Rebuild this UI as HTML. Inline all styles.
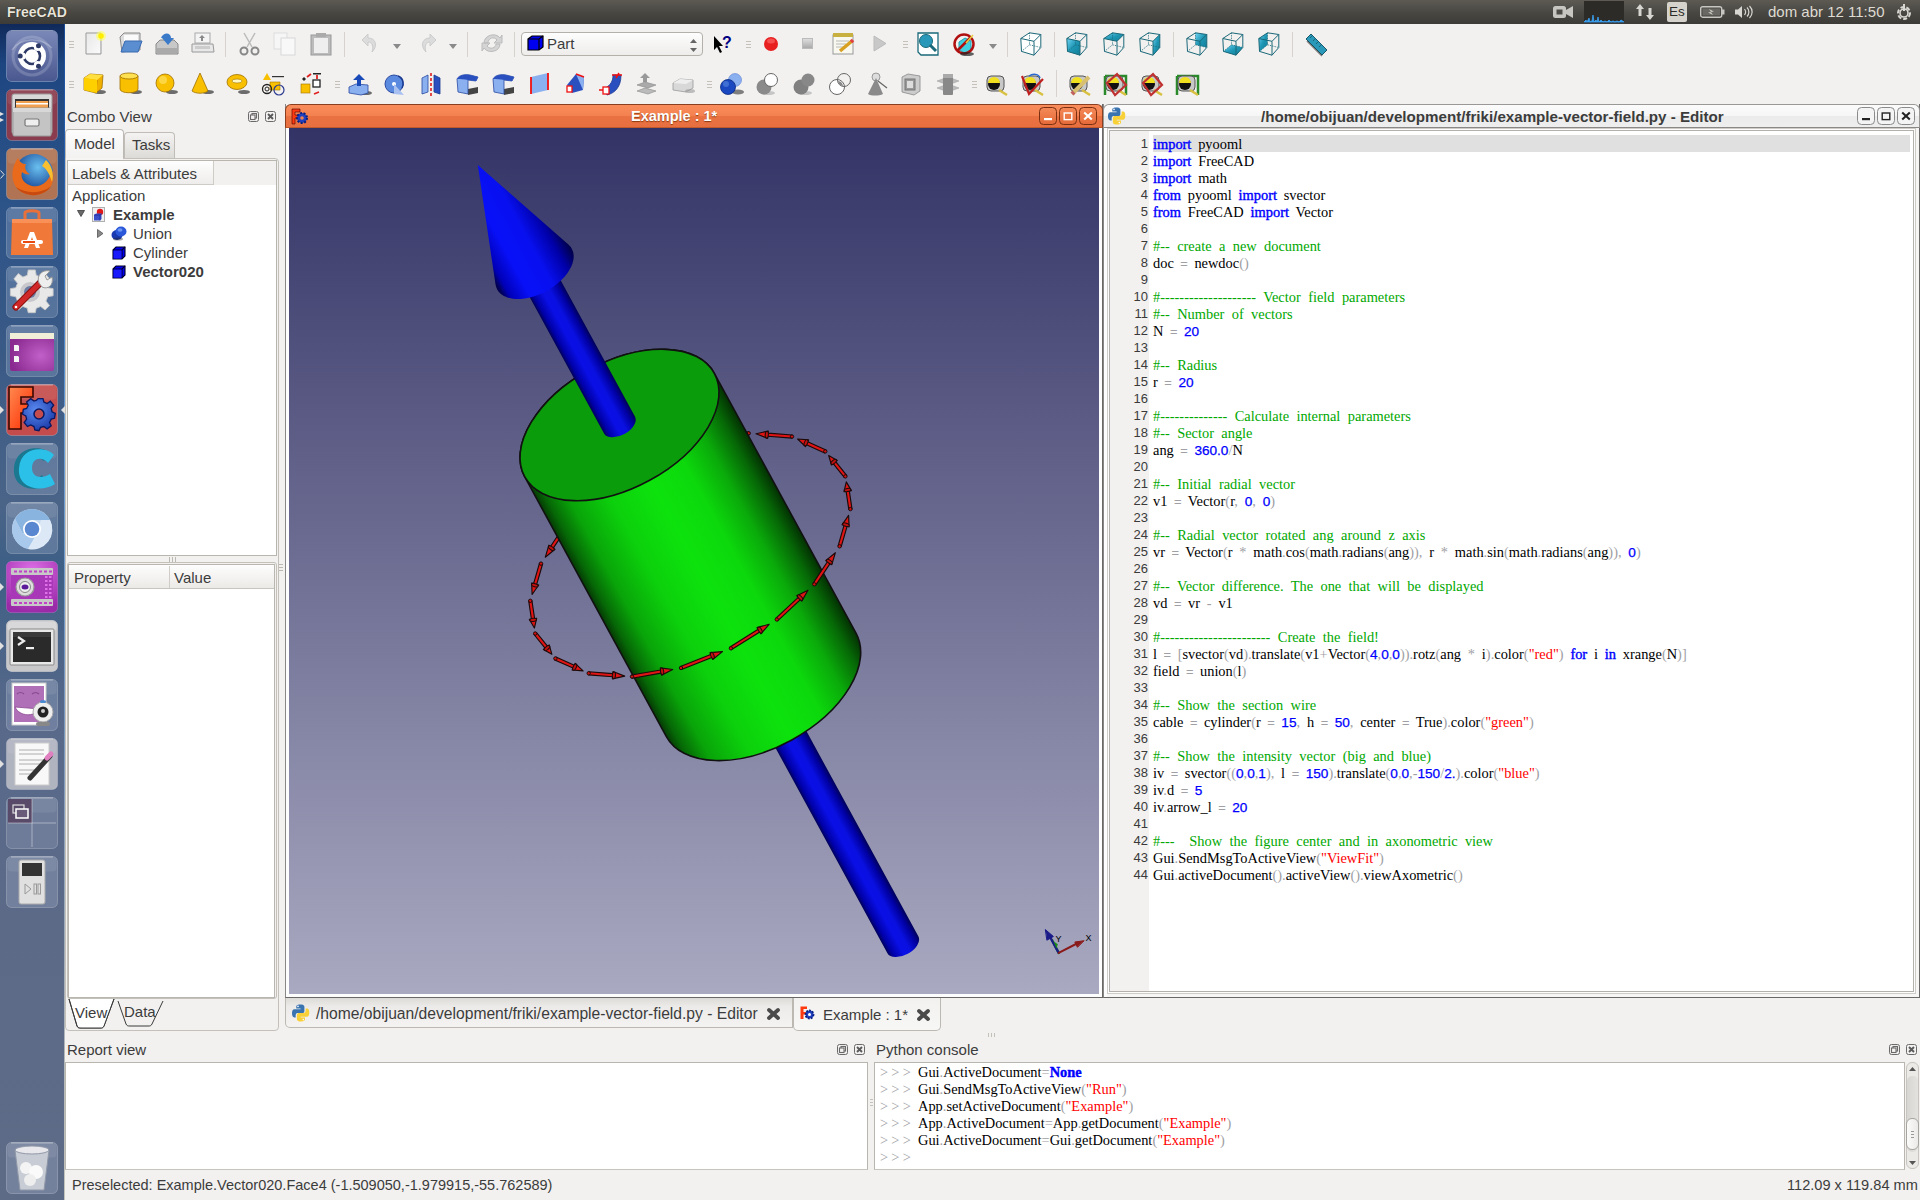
<!DOCTYPE html><html><head><meta charset="utf-8"><style>

*{box-sizing:border-box;margin:0;padding:0}
html,body{width:1920px;height:1200px;overflow:hidden;background:#f2f1f0;font-family:"Liberation Sans",sans-serif;color:#3c3c3c;position:relative}
.a{position:absolute}
.t{white-space:pre;line-height:1}
svg{overflow:visible}
.code{font-family:"Liberation Serif",serif;font-size:14.4px;color:#000;white-space:pre;word-spacing:3.2px;line-height:17px}
.k{color:#0000ff;-webkit-text-stroke:0.4px #0000ff}
.c{color:#00a800;word-spacing:3.8px}
.n{color:#0000ff;font-family:"Liberation Sans",sans-serif;font-size:13.6px;-webkit-text-stroke:0.25px #0000ff;word-spacing:0}
.eq{color:#a0a0a4;font-family:"Liberation Sans",sans-serif;font-size:12px;-webkit-text-stroke:0.3px #a0a0a4}
.o{color:#a0a0a4}
.s{color:#ff0000}

</style></head><body>
<div class="a" style="left:0px;top:0px;width:1920px;height:24px;background:linear-gradient(#5c5a53,#4a4843 50%,#3c3b37)"></div><div class="a t" style="left:7px;top:5px;font-size:14px;font-weight:bold;color:#e8e4da;text-shadow:0 0 1px #000">FreeCAD</div><svg class="a" style="left:1553px;top:5px" width="21" height="14" viewBox="0 0 21 14"><rect x="0" y="1" width="13" height="12" rx="2.5" fill="#c8c6c0"/><rect x="3.5" y="4.5" width="6" height="5" fill="#4e4c47"/><path d="M13,5 L20,1 L20,13 L13,9 Z" fill="#c8c6c0"/></svg><div class="a" style="left:1584px;top:1px;width:40px;height:22px;background:#2c2b28"></div><svg class="a" style="left:1584px;top:12px" width="40" height="11" viewBox="0 0 40 11"><path d="M0,10 L2,8 L3,10 L5,6 L6,10 L8,9 L9,3 L10,10 L12,8 L13,10 L14,5 L15,10 L17,8 L19,10 L21,9 L23,10 L25,8 L27,10 L29,9 L31,10 L33,9 L35,10 L37,8 L40,10 Z" fill="#3aa0f0" stroke="#3aa0f0" stroke-width="0.8"/></svg><svg class="a" style="left:1636px;top:4px" width="19" height="16" viewBox="0 0 19 16"><path d="M4,0 L8,5 L5.5,5 L5.5,12 L2.5,12 L2.5,5 L0,5 Z M14,16 L18,11 L15.5,11 L15.5,4 L12.5,4 L12.5,11 L10,11 Z" fill="#d8d6d0"/></svg><div class="a" style="left:1667px;top:2px;width:20px;height:20px;background:#d6d3cc;border-radius:2px"></div><div class="a t" style="left:1669px;top:5px;font-size:13.5px;color:#2c2b27">Es</div><svg class="a" style="left:1700px;top:6px" width="25" height="12" viewBox="0 0 25 12"><rect x="0.7" y="0.7" width="21" height="10.5" rx="2" fill="none" stroke="#c8c6c0" stroke-width="1.4"/><rect x="22" y="3.5" width="2.5" height="5" fill="#c8c6c0"/><rect x="2.5" y="2.5" width="17.5" height="7" fill="#6a6862"/><path d="M9,3 L14,5.5 L11,6 L13,9 L8,6.5 L11,6 Z" fill="#c8c6c0"/></svg><svg class="a" style="left:1735px;top:5px" width="20" height="14" viewBox="0 0 20 14"><path d="M0,4.5 L3,4.5 L7,1 L7,13 L3,9.5 L0,9.5 Z" fill="#d8d6d0"/><path d="M9.5,4 C11,6 11,8 9.5,10 M12,2.5 C14.5,5 14.5,9 12,11.5 M14.5,1 C18,4.5 18,9.5 14.5,13" fill="none" stroke="#d8d6d0" stroke-width="1.2"/></svg><div class="a t" style="left:1768px;top:4px;font-size:15px;color:#dfdbd2">dom abr 12 11:50</div><svg class="a" style="left:1895px;top:3px" width="18" height="18" viewBox="0 0 18 18"><circle cx="9" cy="10" r="6" fill="none" stroke="#d8d6d0" stroke-width="2" stroke-dasharray="4 2"/><circle cx="9" cy="10" r="4" fill="none" stroke="#d8d6d0" stroke-width="1.6"/><rect x="8" y="1" width="2" height="7" fill="#d8d6d0"/></svg>
<div class="a" style="left:0;top:24px;width:65px;height:1176px;background:linear-gradient(180deg,#10295a 0px,#1d4580 40px,#2a5288 150px,#3a5a86 330px,#4a6488 480px,#3e5f86 540px,#58698a 700px,#5c6a88 900px,#5e6b87 1176px)"></div><div class="a" style="left:64px;top:24px;width:1px;height:1176px;background:linear-gradient(#1c4c98,#2a6ac0 200px,#6aa0d8 400px,#7a98c0 700px,#a8b0b8 950px,#c4c6bc 1176px)"></div><svg class="a" style="left:6px;top:30px" width="52" height="52" viewBox="0 0 52 52"><rect x="0.5" y="0.5" width="51" height="51" rx="5" fill="#6676b0" stroke="rgba(255,255,255,0.22)" stroke-width="1"/><path d="M5,1 L47,1" stroke="rgba(255,255,255,0.45)" stroke-width="1"/><rect x="1.5" y="1.5" width="49" height="14" rx="4" fill="rgba(255,255,255,0.08)"/><defs><linearGradient id="gUb" x1="0" y1="0" x2="0" y2="1"><stop offset="0" stop-color="#7a88b8"/><stop offset="1" stop-color="#4a5890"/></linearGradient></defs><rect x="1" y="1" width="50" height="50" rx="4.5" fill="url(#gUb)"/><path d="M6,20 C14,8 34,6 46,18" fill="none" stroke="rgba(255,255,255,0.25)" stroke-width="1.5"/><circle cx="26" cy="26" r="19" fill="none" stroke="rgba(255,255,255,0.18)" stroke-width="3"/><circle cx="26" cy="26" r="14" fill="#fff"/><circle cx="26" cy="26" r="8" fill="none" stroke="#2e3a66" stroke-width="2.6"/><g fill="#fff"><circle cx="31.5" cy="17.5" r="3.6"/><circle cx="16.5" cy="26" r="3.6"/><circle cx="31.5" cy="34.5" r="3.6"/></g><g fill="#2e3a66"><circle cx="32.5" cy="15.8" r="2.5"/><circle cx="14.2" cy="26" r="2.5"/><circle cx="32.5" cy="36.2" r="2.5"/></g></svg><svg class="a" style="left:6px;top:89px" width="52" height="52" viewBox="0 0 52 52"><rect x="0.5" y="0.5" width="51" height="51" rx="5" fill="#8a3c4e" stroke="rgba(255,255,255,0.22)" stroke-width="1"/><path d="M5,1 L47,1" stroke="rgba(255,255,255,0.45)" stroke-width="1"/><rect x="1.5" y="1.5" width="49" height="14" rx="4" fill="rgba(255,255,255,0.08)"/><rect x="6" y="5" width="40" height="40" rx="2" fill="#d8d8d8" stroke="#9a9a9a" stroke-width="1"/><rect x="9" y="10" width="34" height="9" fill="#333"/><rect x="10" y="12" width="32" height="7" fill="#f0a050"/><rect x="10" y="14" width="32" height="1.5" fill="#fff"/><rect x="7" y="19" width="38" height="28" rx="1" fill="#c4c4c4" stroke="#999" stroke-width="1"/><rect x="7" y="19" width="38" height="4" fill="#d8d8d8"/><rect x="19" y="30" width="14" height="7" rx="1.5" fill="#eee" stroke="#777" stroke-width="1.2"/></svg><svg class="a" style="left:6px;top:148px" width="52" height="52" viewBox="0 0 52 52"><rect x="0.5" y="0.5" width="51" height="51" rx="5" fill="#b07454" stroke="rgba(255,255,255,0.22)" stroke-width="1"/><path d="M5,1 L47,1" stroke="rgba(255,255,255,0.45)" stroke-width="1"/><rect x="1.5" y="1.5" width="49" height="14" rx="4" fill="rgba(255,255,255,0.08)"/><defs><radialGradient id="gFx" cx="0.6" cy="0.35" r="0.6"><stop offset="0" stop-color="#6ac0f0"/><stop offset="1" stop-color="#1a4a98"/></radialGradient></defs><circle cx="28" cy="25" r="19" fill="url(#gFx)"/><path d="M12,10 C6,18 4,30 10,39 C18,50 38,50 45,38 C47,34 48,28 46,22 C44,32 36,40 26,38 C18,36 14,30 16,24 C18,26 22,27 24,26 C20,24 18,20 20,16 C16,16 14,14 12,10 Z" fill="#e86a1a"/><path d="M40,12 C46,18 48,26 46,34 C44,28 42,22 36,18 Z" fill="#f8c030"/><path d="M10,39 C18,50 38,50 45,38 C36,46 20,46 10,39Z" fill="#c84a10"/></svg><svg class="a" style="left:6px;top:207px" width="52" height="52" viewBox="0 0 52 52"><rect x="0.5" y="0.5" width="51" height="51" rx="5" fill="rgba(190,200,225,0.24)" stroke="rgba(255,255,255,0.22)" stroke-width="1"/><path d="M5,1 L47,1" stroke="rgba(255,255,255,0.45)" stroke-width="1"/><rect x="1.5" y="1.5" width="49" height="14" rx="4" fill="rgba(255,255,255,0.08)"/><path d="M19,12 L19,6 C19,3 33,3 33,6 L33,12" fill="none" stroke="#e8703a" stroke-width="3"/><path d="M6,12 L46,12 L47,48 L5,48 Z" fill="#f07838"/><rect x="6" y="12" width="40" height="4" fill="#f89058"/><path d="M18,41 L24,25 L28,25 L34,41 L30,41 L26,30 L22,41 Z" fill="#fff"/><rect x="15" y="33" width="22" height="4" rx="2" fill="#fff"/><rect x="17" y="34" width="12" height="2" fill="#e84a10"/></svg><svg class="a" style="left:6px;top:266px" width="52" height="52" viewBox="0 0 52 52"><rect x="0.5" y="0.5" width="51" height="51" rx="5" fill="rgba(190,200,225,0.24)" stroke="rgba(255,255,255,0.22)" stroke-width="1"/><path d="M5,1 L47,1" stroke="rgba(255,255,255,0.45)" stroke-width="1"/><rect x="1.5" y="1.5" width="49" height="14" rx="4" fill="rgba(255,255,255,0.08)"/><path d="M21,4 L29,4 L30,10 L35,12 L40,8 L45,14 L41,19 L43,24 L49,25 L49,33 L43,34 L41,39 L45,44 L40,49 L35,45 L30,47 L29,52 L21,52 L20,47 L15,45 L10,49 L5,44 L9,39 L7,34 L1,33 L1,25 L7,24 L9,19 L5,14 L10,8 L15,12 L20,10 Z" fill="#e8e8e8" stroke="#c8c8c8" stroke-width="1" transform="translate(3.5,0.4) scale(0.89)"/><circle cx="24" cy="26" r="10" fill="#c8c8cc"/><circle cx="24" cy="26" r="6" fill="#6a7aa0"/><path d="M10,41 L36,15" stroke="#8a1010" stroke-width="7" stroke-linecap="round"/><path d="M10,41 L36,15" stroke="#d02828" stroke-width="5" stroke-linecap="round"/><circle cx="10" cy="41" r="1.3" fill="#fff"/><path d="M33,17 C30,10 36,3 44,5 L39,10 L41,14 L46,11 C48,19 42,24 36,21 Z" fill="#eee" stroke="#999" stroke-width="1"/></svg><svg class="a" style="left:6px;top:325px" width="52" height="52" viewBox="0 0 52 52"><rect x="0.5" y="0.5" width="51" height="51" rx="5" fill="rgba(190,200,225,0.24)" stroke="rgba(255,255,255,0.22)" stroke-width="1"/><path d="M5,1 L47,1" stroke="rgba(255,255,255,0.45)" stroke-width="1"/><rect x="1.5" y="1.5" width="49" height="14" rx="4" fill="rgba(255,255,255,0.08)"/><defs><radialGradient id="gPw" cx="0.7" cy="0.6" r="0.7"><stop offset="0" stop-color="#c060c8"/><stop offset="1" stop-color="#8a2a90"/></radialGradient></defs><rect x="4" y="8" width="44" height="38" rx="2" fill="url(#gPw)"/><rect x="4" y="8" width="44" height="6" fill="#f2efd8"/><path d="M8,20 L12,20 L13,21 L13,26 L8,26 Z M8,31 L12,31 L13,32 L13,37 L8,37 Z" fill="#f4f4f4"/></svg><svg class="a" style="left:6px;top:384px" width="52" height="52" viewBox="0 0 52 52"><rect x="0.5" y="0.5" width="51" height="51" rx="5" fill="#c44c4c" stroke="rgba(255,255,255,0.22)" stroke-width="1"/><path d="M5,1 L47,1" stroke="rgba(255,255,255,0.45)" stroke-width="1"/><rect x="1.5" y="1.5" width="49" height="14" rx="4" fill="rgba(255,255,255,0.08)"/><defs><linearGradient id="gFc" x1="0" y1="0" x2="1" y2="1"><stop offset="0" stop-color="#ff8a50"/><stop offset="1" stop-color="#ff2a00"/></linearGradient><radialGradient id="gGear" cx="0.4" cy="0.35" r="0.7"><stop offset="0" stop-color="#5a8af0"/><stop offset="1" stop-color="#1a3aa8"/></radialGradient></defs><path d="M3,3 L27,3 L27,13 L15,13 L15,20 L24,20 L24,29 L15,29 L15,45 L3,45 Z" fill="url(#gFc)" stroke="#3a0800" stroke-width="1.6"/><path d="M30,13 L36,13 L37,17 L41,19 L45,16 L49,21 L46,25 L47,29 L51,31 L50,37 L46,38 L44,42 L46,46 L41,50 L37,47 L33,48 L31,52 L26,51 L25,47 L21,45 L17,47 L13,42 L16,38 L15,34 L11,32 L12,26 L16,25 L18,21 L16,17 L21,13 L25,16 L28,15 Z" fill="url(#gGear)" stroke="#0a1860" stroke-width="1.6" transform="translate(7.5,4) scale(0.82)"/><circle cx="33" cy="30" r="5" fill="#c44c4c" stroke="#0a1860" stroke-width="1.5"/></svg><svg class="a" style="left:6px;top:443px" width="52" height="52" viewBox="0 0 52 52"><rect x="0.5" y="0.5" width="51" height="51" rx="5" fill="rgba(190,200,225,0.24)" stroke="rgba(255,255,255,0.22)" stroke-width="1"/><path d="M5,1 L47,1" stroke="rgba(255,255,255,0.45)" stroke-width="1"/><rect x="1.5" y="1.5" width="49" height="14" rx="4" fill="rgba(255,255,255,0.08)"/><path d="M44,10 C36,2 10,2 8,25 C6,46 30,50 42,42 L36,32 C30,38 20,36 20,25 C20,14 32,12 38,18 Z" fill="#1a7890"/><path d="M48,12 C40,3 15,3 13,25 C11,46 36,50 49,41 L44,31 C36,36 26,35 26,25 C26,15 36,13 42,20 Z" fill="#2ac0e8"/></svg><svg class="a" style="left:6px;top:502px" width="52" height="52" viewBox="0 0 52 52"><rect x="0.5" y="0.5" width="51" height="51" rx="5" fill="rgba(190,200,225,0.24)" stroke="rgba(255,255,255,0.22)" stroke-width="1"/><path d="M5,1 L47,1" stroke="rgba(255,255,255,0.45)" stroke-width="1"/><rect x="1.5" y="1.5" width="49" height="14" rx="4" fill="rgba(255,255,255,0.08)"/><circle cx="26" cy="27" r="20" fill="#c8dcf0"/><path d="M26,7 A20,20 0 0 0 9,17 L17,32 L26,18 L44,18 A20,20 0 0 0 26,7 Z" fill="#8ab4e0"/><path d="M9,17 A20,20 0 0 0 22,47 L30,33 L17,32 Z" fill="#a8c8ec"/><path d="M44,18 L35,18 L30,33 L22,47 A20,20 0 0 0 44,18 Z" fill="#dce8f6"/><circle cx="26" cy="27" r="9" fill="#fff"/><circle cx="26" cy="27" r="7.3" fill="#5a88d0"/></svg><svg class="a" style="left:6px;top:561px" width="52" height="52" viewBox="0 0 52 52"><rect x="0.5" y="0.5" width="51" height="51" rx="5" fill="#b04cc0" stroke="rgba(255,255,255,0.22)" stroke-width="1"/><path d="M5,1 L47,1" stroke="rgba(255,255,255,0.45)" stroke-width="1"/><rect x="1.5" y="1.5" width="49" height="14" rx="4" fill="rgba(255,255,255,0.08)"/><defs><radialGradient id="gRc" cx="0.5" cy="0.2" r="0.8"><stop offset="0" stop-color="#e070e8"/><stop offset="1" stop-color="#9a2aa8"/></radialGradient></defs><rect x="0.5" y="0.5" width="51" height="51" rx="5" fill="url(#gRc)"/><rect x="5" y="13" width="42" height="26" fill="#a838b8"/><rect x="5" y="7" width="42" height="7" rx="1" fill="#c8c8c8"/><rect x="5" y="38" width="42" height="7" rx="1" fill="#c8c8c8"/><rect x="8" y="9.5" width="3" height="2" fill="#c040c8"/><rect x="8" y="41" width="3" height="2" fill="#c040c8"/><rect x="13" y="9.5" width="3" height="2" fill="#c040c8"/><rect x="13" y="41" width="3" height="2" fill="#c040c8"/><rect x="18" y="9.5" width="3" height="2" fill="#c040c8"/><rect x="18" y="41" width="3" height="2" fill="#c040c8"/><rect x="23" y="9.5" width="3" height="2" fill="#c040c8"/><rect x="23" y="41" width="3" height="2" fill="#c040c8"/><rect x="28" y="9.5" width="3" height="2" fill="#c040c8"/><rect x="28" y="41" width="3" height="2" fill="#c040c8"/><rect x="33" y="9.5" width="3" height="2" fill="#c040c8"/><rect x="33" y="41" width="3" height="2" fill="#c040c8"/><rect x="38" y="9.5" width="3" height="2" fill="#c040c8"/><rect x="38" y="41" width="3" height="2" fill="#c040c8"/><rect x="43" y="9.5" width="3" height="2" fill="#c040c8"/><rect x="43" y="41" width="3" height="2" fill="#c040c8"/><g fill="#e070e8"><rect x="39" y="15" width="2.5" height="2"/><rect x="43" y="15" width="2.5" height="2"/><rect x="39" y="19" width="2.5" height="2"/><rect x="43" y="19" width="2.5" height="2"/><rect x="39" y="23" width="2.5" height="2"/><rect x="43" y="23" width="2.5" height="2"/><rect x="39" y="27" width="2.5" height="2"/><rect x="43" y="27" width="2.5" height="2"/><rect x="39" y="31" width="2.5" height="2"/><rect x="43" y="31" width="2.5" height="2"/><rect x="39" y="35" width="2.5" height="2"/><rect x="43" y="35" width="2.5" height="2"/></g><circle cx="19" cy="26" r="9" fill="#ddd" stroke="#999" stroke-width="1.2"/><circle cx="19" cy="26" r="5.5" fill="#eee" stroke="#888"/><ellipse cx="19" cy="26" rx="3.5" ry="2.5" fill="#5a1a9a"/></svg><svg class="a" style="left:6px;top:620px" width="52" height="52" viewBox="0 0 52 52"><rect x="0.5" y="0.5" width="51" height="51" rx="5" fill="#c4c4c6" stroke="rgba(255,255,255,0.22)" stroke-width="1"/><path d="M5,1 L47,1" stroke="rgba(255,255,255,0.45)" stroke-width="1"/><rect x="1.5" y="1.5" width="49" height="14" rx="4" fill="rgba(255,255,255,0.08)"/><rect x="0.5" y="0.5" width="51" height="51" rx="5" fill="#c8c8ca"/><rect x="1.5" y="1.5" width="49" height="10" rx="4" fill="#d8d8da"/><rect x="4" y="9" width="44" height="36" rx="1" fill="#e8e8e8" stroke="#888" stroke-width="1"/><rect x="7" y="12" width="38" height="30" fill="#2a2a2a"/><rect x="7" y="12" width="38" height="5" fill="#3a3a3a"/><path d="M12,17 L18,21 L12,25" fill="none" stroke="#eee" stroke-width="2.2"/><rect x="20" y="27" width="8" height="2.2" fill="#eee"/></svg><svg class="a" style="left:6px;top:679px" width="52" height="52" viewBox="0 0 52 52"><rect x="0.5" y="0.5" width="51" height="51" rx="5" fill="rgba(190,200,225,0.24)" stroke="rgba(255,255,255,0.22)" stroke-width="1"/><path d="M5,1 L47,1" stroke="rgba(255,255,255,0.45)" stroke-width="1"/><rect x="1.5" y="1.5" width="49" height="14" rx="4" fill="rgba(255,255,255,0.08)"/><rect x="6" y="4" width="34" height="42" fill="#fff" stroke="#ccc"/><rect x="8" y="7" width="30" height="36" fill="#b070b8"/><path d="M11,15 C13,13 16,13 18,15 M26,15 C28,13 31,13 33,15" fill="none" stroke="#8a4a90" stroke-width="1.2"/><path d="M9,28 C14,38 28,38 34,30 Z" fill="#fff" stroke="#8a4a90" stroke-width="0.8"/><circle cx="37" cy="33" r="10" fill="#eee" stroke="#aaa"/><circle cx="37" cy="33" r="5.5" fill="#222"/><circle cx="37" cy="32" r="2" fill="#ccc"/><ellipse cx="37" cy="22.5" rx="3" ry="1.5" fill="#4a8ad0"/><rect x="30" y="43" width="14" height="4" rx="2" fill="#888"/></svg><svg class="a" style="left:6px;top:738px" width="52" height="52" viewBox="0 0 52 52"><rect x="0.5" y="0.5" width="51" height="51" rx="5" fill="rgba(205,205,210,0.75)" stroke="rgba(255,255,255,0.22)" stroke-width="1"/><path d="M5,1 L47,1" stroke="rgba(255,255,255,0.45)" stroke-width="1"/><rect x="1.5" y="1.5" width="49" height="14" rx="4" fill="rgba(255,255,255,0.08)"/><rect x="9" y="5" width="34" height="42" fill="#f8f8f8" stroke="#ccc"/><g stroke="#999" stroke-width="0.8"><line x1="13" y1="12" x2="38" y2="12"/><line x1="13" y1="16" x2="38" y2="16"/><line x1="13" y1="22" x2="38" y2="22"/><line x1="13" y1="26" x2="38" y2="26"/><line x1="13" y1="32" x2="30" y2="32"/><line x1="13" y1="36" x2="30" y2="36"/></g><path d="M24,40 L44,18" stroke="#333" stroke-width="5" stroke-linecap="round"/><path d="M41,20 L45,16" stroke="#e080c0" stroke-width="5" stroke-linecap="round"/></svg><svg class="a" style="left:6px;top:797px" width="52" height="52" viewBox="0 0 52 52"><rect x="0.5" y="0.5" width="51" height="51" rx="5" fill="rgba(190,200,225,0.20)" stroke="rgba(255,255,255,0.22)" stroke-width="1"/><path d="M5,1 L47,1" stroke="rgba(255,255,255,0.45)" stroke-width="1"/><rect x="1.5" y="1.5" width="49" height="14" rx="4" fill="rgba(255,255,255,0.08)"/><rect x="2" y="2" width="24" height="24" fill="#5a4a6a"/><line x1="26" y1="2" x2="26" y2="50" stroke="rgba(255,255,255,0.4)"/><line x1="2" y1="26" x2="50" y2="26" stroke="rgba(255,255,255,0.4)"/><rect x="7" y="8" width="11" height="8" fill="none" stroke="#ddd" stroke-width="1.2"/><rect x="10" y="12" width="12" height="9" fill="#6a5a7a" stroke="#fff" stroke-width="1.5"/></svg><svg class="a" style="left:6px;top:856px" width="52" height="52" viewBox="0 0 52 52"><rect x="0.5" y="0.5" width="51" height="51" rx="5" fill="rgba(190,200,225,0.24)" stroke="rgba(255,255,255,0.22)" stroke-width="1"/><path d="M5,1 L47,1" stroke="rgba(255,255,255,0.45)" stroke-width="1"/><rect x="1.5" y="1.5" width="49" height="14" rx="4" fill="rgba(255,255,255,0.08)"/><rect x="13" y="4" width="26" height="44" rx="2" fill="#e0e0e0" stroke="#aaa"/><rect x="16" y="7" width="20" height="13" fill="#333"/><path d="M19,28 L25,33 L19,38 Z" fill="none" stroke="#999"/><rect x="28" y="28" width="2.5" height="10" fill="none" stroke="#999"/><rect x="32" y="28" width="2.5" height="10" fill="none" stroke="#999"/></svg><svg class="a" style="left:6px;top:1142px" width="52" height="52" viewBox="0 0 52 52"><rect x="0.5" y="0.5" width="51" height="51" rx="5" fill="rgba(190,200,225,0.24)" stroke="rgba(255,255,255,0.22)" stroke-width="1"/><path d="M5,1 L47,1" stroke="rgba(255,255,255,0.45)" stroke-width="1"/><rect x="1.5" y="1.5" width="49" height="14" rx="4" fill="rgba(255,255,255,0.08)"/><path d="M9,8 L43,8 L38,48 L14,48 Z" fill="#c8ccd4" stroke="#9098a8" stroke-width="1"/><ellipse cx="26" cy="8" rx="17" ry="4" fill="#e8e8ec" stroke="#9098a8"/><circle cx="20" cy="26" r="6" fill="#f4f4f4"/><circle cx="30" cy="30" r="7" fill="#fafafa"/><circle cx="24" cy="38" r="6" fill="#eee"/></svg><svg class="a" style="left:0;top:112px" width="5" height="10"><path d="M0,0 L4,2 L0,4 Z M0,6 L4,8 L0,10Z" fill="#e0e0e0"/></svg><svg class="a" style="left:0;top:170px" width="5" height="9"><path d="M0.5,0.5 L4,4.5 L0.5,8.5" fill="none" stroke="#e0e0e0"/></svg><svg class="a" style="left:0;top:406px" width="5" height="8"><path d="M0,0 L4,4 L0,8 Z" fill="#e0e0e0"/></svg><svg class="a" style="left:0;top:583px" width="5" height="8"><path d="M0,0 L4,4 L0,8 Z" fill="#e0e0e0"/></svg><svg class="a" style="left:0;top:642px" width="5" height="8"><path d="M0,0 L4,4 L0,8 Z" fill="#e0e0e0"/></svg><svg class="a" style="left:0;top:760px" width="5" height="8"><path d="M0,0 L4,4 L0,8 Z" fill="#e0e0e0"/></svg><svg class="a" style="left:60px;top:406px" width="5" height="8"><path d="M5,0 L1,4 L5,8 Z" fill="#e0e0e0"/></svg>
<svg width="0" height="0" style="position:absolute"><defs><linearGradient id="gOrBtn" x1="0" y1="0" x2="0" y2="1"><stop offset="0" stop-color="#f48a58"/><stop offset="1" stop-color="#e46a38"/></linearGradient><linearGradient id="gCube" x1="0" y1="0" x2="1" y2="1"><stop offset="0" stop-color="#70d4f4"/><stop offset="0.5" stop-color="#1e96b4"/><stop offset="1" stop-color="#137e98"/></linearGradient><linearGradient id="gPaper" x1="0" y1="0" x2="1" y2="1"><stop offset="0" stop-color="#e8e8e8"/><stop offset="1" stop-color="#fafafa"/></linearGradient></defs></svg><div class="a" style="left:285px;top:104px;width:1635px;height:894px;background:#f2f1f0"></div><div class="a" style="left:285px;top:104px;width:818px;height:894px;background:#f4f3f2;border-left:1px solid #8a8886;border-bottom:1px solid #6a6866;border-right:1px solid #6a6866"></div><div class="a" style="left:286px;top:127px;width:3px;height:870px;background:#fdfdfd"></div><div class="a" style="left:1099px;top:127px;width:3px;height:870px;background:#fdfdfd"></div><div class="a" style="left:286px;top:994px;width:816px;height:3px;background:#fdfdfd"></div><div class="a" style="left:285px;top:104px;width:818px;height:24px;background:linear-gradient(#f98c5c 0%,#f48250 48%,#ea7242 52%,#e87040 100%);border-radius:6px 6px 0 0;border:1px solid #8a4020;border-bottom:1px solid #c05a2a"></div><svg class="a" style="left:291px;top:108px" width="18" height="17" viewBox="0 0 18 17"><path d="M1,1 L9,1 L9,4 L4,4 L4,7 L8,7 L8,10 L4,10 L4,16 L1,16 Z" fill="#ff3a10" stroke="#400" stroke-width="0.6"/><circle cx="11" cy="10" r="5" fill="#2040c0" stroke="#0a2080" stroke-width="2" stroke-dasharray="2 1.5"/><circle cx="11" cy="10" r="1.8" fill="#f08050"/></svg><div class="a t" style="left:631px;top:109px;font-size:14.5px;font-weight:bold;color:#fff;text-shadow:0 1px 1px #8a3a10">Example : 1*</div><svg class="a" style="left:1039px;top:107px" width="18" height="18" viewBox="0 0 18 18"><rect x="0.5" y="0.5" width="17" height="17" rx="4" fill="url(#gOrBtn)" stroke="#7a3010" stroke-width="1"/><rect x="5" y="11" width="8" height="2.2" fill="#fff"/></svg><svg class="a" style="left:1059px;top:107px" width="18" height="18" viewBox="0 0 18 18"><rect x="0.5" y="0.5" width="17" height="17" rx="4" fill="url(#gOrBtn)" stroke="#7a3010" stroke-width="1"/><rect x="5.2" y="6" width="7.6" height="6.6" fill="none" stroke="#fff" stroke-width="1.4"/></svg><svg class="a" style="left:1079px;top:107px" width="18" height="18" viewBox="0 0 18 18"><rect x="0.5" y="0.5" width="17" height="17" rx="4" fill="url(#gOrBtn)" stroke="#7a3010" stroke-width="1"/><path d="M5.2,5.5 L12.8,12.5 M12.8,5.5 L5.2,12.5" stroke="#fff" stroke-width="2.1"/></svg><div class="a" style="left:1103px;top:104px;width:817px;height:894px;background:#f2f1f0;border-left:1px solid #8a8886;border-bottom:1px solid #6a6866;border-right:1px solid #6a6866"></div><div class="a" style="left:1103px;top:104px;width:817px;height:24px;background:linear-gradient(#fbfbfb 0%,#f6f6f6 48%,#ebebeb 52%,#eeeeee 100%);border-radius:6px 6px 0 0;border:1px solid #9a9896;border-bottom:1px solid #8a8886"></div><svg class="a" style="left:1108px;top:107px" width="18" height="18" viewBox="0 0 18 18"><path d="M8.5,0.5 C4,0.5 4.3,2.5 4.3,2.5 L4.3,4.6 L8.6,4.6 L8.6,5.3 L2.6,5.3 C2.6,5.3 0,5 0,9.3 C0,13.6 2.3,13.4 2.3,13.4 L3.7,13.4 L3.7,11.4 C3.7,11.4 3.6,9.1 6,9.1 L10.2,9.1 C10.2,9.1 12.4,9.1 12.4,6.9 L12.4,2.8 C12.4,2.8 12.7,0.5 8.5,0.5 Z" fill="#3a74b0"/><circle cx="6" cy="2.4" r="0.8" fill="#fff"/><path d="M8.8,17.5 C13.3,17.5 13,15.5 13,15.5 L13,13.4 L8.7,13.4 L8.7,12.7 L14.7,12.7 C14.7,12.7 17.3,13 17.3,8.7 C17.3,4.4 15,4.6 15,4.6 L13.6,4.6 L13.6,6.6 C13.6,6.6 13.7,8.9 11.3,8.9 L7.1,8.9 C7.1,8.9 4.9,8.9 4.9,11.1 L4.9,15.2 C4.9,15.2 4.6,17.5 8.8,17.5 Z" fill="#f8d038"/><circle cx="11.3" cy="15.6" r="0.8" fill="#fff"/></svg><div class="a t" style="left:1261px;top:109px;font-size:15.15px;font-weight:bold;color:#3c3c3c">/home/obijuan/development/friki/example-vector-field.py - Editor</div><svg class="a" style="left:1857px;top:107px" width="18" height="18" viewBox="0 0 18 18"><rect x="0.5" y="0.5" width="17" height="17" rx="4" fill="#f4f4f4" stroke="#8a8a8a" stroke-width="1"/><rect x="5" y="11" width="8" height="2.2" fill="#222"/></svg><svg class="a" style="left:1877px;top:107px" width="18" height="18" viewBox="0 0 18 18"><rect x="0.5" y="0.5" width="17" height="17" rx="4" fill="#f4f4f4" stroke="#8a8a8a" stroke-width="1"/><rect x="5.2" y="6" width="7.6" height="6.6" fill="none" stroke="#222" stroke-width="1.4"/></svg><svg class="a" style="left:1897px;top:107px" width="18" height="18" viewBox="0 0 18 18"><rect x="0.5" y="0.5" width="17" height="17" rx="4" fill="#f4f4f4" stroke="#8a8a8a" stroke-width="1"/><path d="M5.2,5.5 L12.8,12.5 M12.8,5.5 L5.2,12.5" stroke="#222" stroke-width="2.1"/></svg><div class="a" style="left:1104px;top:128px;width:815px;height:869px;background:#f7f6f5;border-left:3px solid #fdfdfd"></div><div class="a" style="left:1107px;top:128px;width:809px;height:866px;border:1px solid #cfccc7;background:#fdfdfd"></div><div class="a" style="left:1109px;top:130px;width:805px;height:862px;border:1px solid #b4b1ac;background:#f2f1f0"></div><div class="a" style="left:1149px;top:131px;width:764px;height:860px;background:#fff"></div><div class="a" style="left:1153px;top:135px;width:757px;height:17px;background:#e0e0e0"></div>
<svg class="a" style="left:69px;top:41px" width="5" height="8"><g stroke="#c4c1bb" stroke-width="1"><line x1="0" y1="0.5" x2="5" y2="0.5"/><line x1="0" y1="3.5" x2="5" y2="3.5"/><line x1="0" y1="6.5" x2="5" y2="6.5"/></g></svg><svg class="a" style="left:746px;top:41px" width="5" height="8"><g stroke="#c4c1bb" stroke-width="1"><line x1="0" y1="0.5" x2="5" y2="0.5"/><line x1="0" y1="3.5" x2="5" y2="3.5"/><line x1="0" y1="6.5" x2="5" y2="6.5"/></g></svg><svg class="a" style="left:903px;top:41px" width="5" height="8"><g stroke="#c4c1bb" stroke-width="1"><line x1="0" y1="0.5" x2="5" y2="0.5"/><line x1="0" y1="3.5" x2="5" y2="3.5"/><line x1="0" y1="6.5" x2="5" y2="6.5"/></g></svg><svg class="a" style="left:69px;top:81px" width="5" height="8"><g stroke="#c4c1bb" stroke-width="1"><line x1="0" y1="0.5" x2="5" y2="0.5"/><line x1="0" y1="3.5" x2="5" y2="3.5"/><line x1="0" y1="6.5" x2="5" y2="6.5"/></g></svg><svg class="a" style="left:335px;top:81px" width="5" height="8"><g stroke="#c4c1bb" stroke-width="1"><line x1="0" y1="0.5" x2="5" y2="0.5"/><line x1="0" y1="3.5" x2="5" y2="3.5"/><line x1="0" y1="6.5" x2="5" y2="6.5"/></g></svg><svg class="a" style="left:707px;top:81px" width="5" height="8"><g stroke="#c4c1bb" stroke-width="1"><line x1="0" y1="0.5" x2="5" y2="0.5"/><line x1="0" y1="3.5" x2="5" y2="3.5"/><line x1="0" y1="6.5" x2="5" y2="6.5"/></g></svg><svg class="a" style="left:972px;top:81px" width="5" height="8"><g stroke="#c4c1bb" stroke-width="1"><line x1="0" y1="0.5" x2="5" y2="0.5"/><line x1="0" y1="3.5" x2="5" y2="3.5"/><line x1="0" y1="6.5" x2="5" y2="6.5"/></g></svg><div class="a" style="left:225px;top:32px;width:1px;height:25px;background:#d6d3ce"></div><div class="a" style="left:344px;top:32px;width:1px;height:25px;background:#d6d3ce"></div><div class="a" style="left:467px;top:32px;width:1px;height:25px;background:#d6d3ce"></div><div class="a" style="left:514px;top:32px;width:1px;height:25px;background:#d6d3ce"></div><div class="a" style="left:1007px;top:32px;width:1px;height:25px;background:#d6d3ce"></div><div class="a" style="left:1054px;top:32px;width:1px;height:25px;background:#d6d3ce"></div><div class="a" style="left:1173px;top:32px;width:1px;height:25px;background:#d6d3ce"></div><div class="a" style="left:1292px;top:32px;width:1px;height:25px;background:#d6d3ce"></div><div class="a" style="left:1056px;top:70px;width:1px;height:27px;background:#d6d3ce"></div><svg class="a" style="left:84px;top:32px" width="24" height="24" viewBox="0 0 24 24"><path d="M2,1 L17,1 L17,22 L2,22 Z" fill="#eee" stroke="#999" stroke-width="1"/><path d="M3,2 L16,2 L16,21 L3,21Z" fill="url(#gPaper)"/><circle cx="17" cy="4" r="5" fill="#ffff60" opacity="0.6"/><circle cx="17" cy="4" r="2.8" fill="#ffee00"/></svg><svg class="a" style="left:118px;top:32px" width="24" height="24" viewBox="0 0 24 24"><path d="M2,5 L6,1 L22,1 L22,18 L4,20 Z" fill="#ddd" stroke="#888" stroke-width="1"/><rect x="6" y="3" width="14" height="10" fill="#fafafa"/><path d="M3,20 L7,9 L24,9 L20,20 Z" fill="#5a8ed0" stroke="#3a6ab0" stroke-width="1"/></svg><svg class="a" style="left:155px;top:32px" width="24" height="24" viewBox="0 0 24 24"><path d="M1,12 L5,8 L19,8 L23,12 L23,22 L1,22 Z" fill="#c8c8c8" stroke="#888" stroke-width="1"/><rect x="2" y="16" width="20" height="5" fill="#aaa"/><path d="M6,6 C8,0 16,0 16,6 L19,6 L13,13 L7,6 Z" fill="#3a7ac8"/></svg><svg class="a" style="left:191px;top:32px" width="24" height="24" viewBox="0 0 24 24"><rect x="4" y="1" width="15" height="10" fill="#f4f4f4" stroke="#aaa"/><path d="M11,3 L14,6 L12,6 L12,9 L10,9 L10,6 L8,6 Z" fill="#888"/><path d="M1,12 L22,12 L23,20 L1,20 Z" fill="#e8e8e8" stroke="#999"/><rect x="4" y="14" width="15" height="3" fill="#ccc"/></svg><svg class="a" style="left:239px;top:32px" width="24" height="24" viewBox="0 0 24 24"><path d="M5,1 L13,15 M16,1 L8,15" stroke="#bbb" stroke-width="1.5"/><circle cx="5" cy="19" r="3.5" fill="none" stroke="#888" stroke-width="2"/><circle cx="16" cy="19" r="3.5" fill="none" stroke="#888" stroke-width="2"/></svg><svg class="a" style="left:273px;top:32px" width="24" height="24" viewBox="0 0 24 24"><rect x="1" y="1" width="13" height="16" fill="#f6f6f6" stroke="#ddd"/><rect x="8" y="6" width="14" height="17" fill="#f8f8f8" stroke="#d8d8d8"/></svg><svg class="a" style="left:310px;top:32px" width="24" height="24" viewBox="0 0 24 24"><rect x="1" y="3" width="20" height="20" fill="#bbb" stroke="#999"/><rect x="4" y="6" width="14" height="15" fill="#eee"/><rect x="6" y="1" width="10" height="4" fill="#aaa"/></svg><svg class="a" style="left:358px;top:32px" width="24" height="24" viewBox="0 0 24 24"><path d="M4,8 L10,2 L10,6 C18,6 20,14 14,20 C16,14 14,10 10,10 L10,14 Z" fill="#dcdcdc" stroke="#ccc"/></svg><svg class="a" style="left:393px;top:44px" width="8" height="6"><path d="M0,0 L8,0 L4,5 Z" fill="#8a8a8a"/></svg><svg class="a" style="left:416px;top:32px" width="24" height="24" viewBox="0 0 24 24"><path d="M20,8 L14,2 L14,6 C6,6 4,14 10,20 C8,14 10,10 14,10 L14,14 Z" fill="#dcdcdc" stroke="#ccc"/></svg><svg class="a" style="left:449px;top:44px" width="8" height="6"><path d="M0,0 L8,0 L4,5 Z" fill="#8a8a8a"/></svg><svg class="a" style="left:481px;top:32px" width="24" height="24" viewBox="0 0 24 24"><path d="M3,11 C3,3 15,0 19,6 L21,3 L21,11 L13,11 L16,8 C13,4 7,6 7,11 Z M19,12 C19,20 7,22 3,16 L1,19 L1,11 L9,11 L6,14 C9,18 15,16 15,12 Z" fill="#d4d4d4" stroke="#bbb"/></svg><div class="a" style="left:521px;top:32px;width:182px;height:24px;border:1px solid #b4b1ab;border-radius:4px;background:linear-gradient(#fdfdfd,#eeedeb)"></div><svg class="a" style="left:527px;top:35px" width="17" height="16" viewBox="0 0 17 16"><path d="M1,4 L5,1 L16,1 L16,12 L12,15 L1,15 Z" fill="#0000f0" stroke="#000" stroke-width="1.2"/><path d="M1,4 L12,4 L16,1 M12,4 L12,15" fill="none" stroke="#000" stroke-width="1.2"/></svg><div class="a t" style="left:547px;top:36px;font-size:15px;color:#3c3c3c">Part</div><svg class="a" style="left:690px;top:39px" width="7" height="14" viewBox="0 0 7 14"><path d="M0,4 L3.5,0 L7,4 Z M0,9 L7,9 L3.5,13 Z" fill="#666"/></svg><svg class="a" style="left:713px;top:35px" width="20" height="20" viewBox="0 0 20 20"><path d="M1,1 L1,15 L4,12 L7,18 L9,17 L6,11 L10,11 Z" fill="#000"/><text x="9" y="12.5" font-family="Liberation Sans" font-weight="bold" font-size="16" fill="#000080">?</text></svg><svg class="a" style="left:763px;top:36px" width="16" height="16" viewBox="0 0 16 16"><circle cx="8" cy="8" r="7" fill="#e82020"/><ellipse cx="8" cy="5" rx="4" ry="2.5" fill="#ff7070" opacity="0.6"/></svg><div class="a" style="left:802px;top:38px;width:11px;height:11px;background:linear-gradient(#ddd,#aaa);border:1px solid #bbb"></div><svg class="a" style="left:832px;top:32px" width="24" height="24" viewBox="0 0 24 24"><rect x="1" y="3" width="20" height="19" fill="#f8f8f0" stroke="#999"/><rect x="1" y="1" width="20" height="4" fill="#c8b040"/><g stroke="#aaa" stroke-width="0.8"><line x1="4" y1="9" x2="17" y2="9"/><line x1="4" y1="12" x2="14" y2="12"/><line x1="4" y1="15" x2="12" y2="15"/></g><path d="M8,19 L20,9" stroke="#d8a020" stroke-width="3.5"/><path d="M19,10 L21,8" stroke="#e04040" stroke-width="3.5"/></svg><svg class="a" style="left:873px;top:36px" width="14" height="16" viewBox="0 0 14 16"><path d="M1,0 L13,7.5 L1,15 Z" fill="#c8c8c8" stroke="#bbb"/></svg><svg class="a" style="left:917px;top:32px" width="24" height="24" viewBox="0 0 24 24"><path d="M1,1 L21,1 L21,23 L4,23 L1,20 Z" fill="#fff" stroke="#1a6a7a" stroke-width="1.3"/><circle cx="9" cy="9" r="6.5" fill="#2a98b8" stroke="#1a6a7a"/><path d="M13,13 L19,19" stroke="#1a6a7a" stroke-width="3"/></svg><svg class="a" style="left:953px;top:33px" width="24" height="24" viewBox="0 0 24 24"><path d="M6,9 L12,5 L18,8 L18,17 L12,20 L6,17 Z" fill="#40d0e0" stroke="#2aa0b0"/><circle cx="11" cy="11" r="9.5" fill="none" stroke="#b01010" stroke-width="2.5"/><path d="M4,18 L18,4" stroke="#b01010" stroke-width="2.5"/><path d="M13,10 L20,2" stroke="#e8d040" stroke-width="1.5"/><ellipse cx="14" cy="21" rx="7" ry="2" fill="#222" opacity="0.7"/></svg><svg class="a" style="left:989px;top:44px" width="8" height="6"><path d="M0,0 L8,0 L4,5 Z" fill="#8a8a8a"/></svg><svg class="a" style="left:1020px;top:32px" width="24" height="24" viewBox="0 0 24 24"><polygon points="0.8,6.5 9.5,0.8 20.8,2.5 20.8,15.5 14,23.2 1.5,19.4" fill="#fff"/><g fill="none" stroke="#1a6878" stroke-width="1" stroke-linejoin="round"><polygon points="0.8,6.5 9.5,0.8 20.8,2.5 20.8,15.5 14,23.2 1.5,19.4"/><polyline points="0.8,6.5 14,9.3 20.8,2.5"/><polyline points="14,9.3 14,23.2"/></g><g fill="none" stroke="#1a6878" stroke-width="0.8" stroke-dasharray="1.3 1.1"><polyline points="9.5,0.8 9.5,12.8 1.5,19.4"/><polyline points="9.5,12.8 20.8,15.5"/></g></svg><svg class="a" style="left:1066px;top:32px" width="24" height="24" viewBox="0 0 24 24"><polygon points="0.8,6.5 14,9.3 14,23.2 1.5,19.4" fill="url(#gCube)"/><g fill="none" stroke="#1a6878" stroke-width="1" stroke-linejoin="round"><polygon points="0.8,6.5 9.5,0.8 20.8,2.5 20.8,15.5 14,23.2 1.5,19.4"/><polyline points="0.8,6.5 14,9.3 20.8,2.5"/><polyline points="14,9.3 14,23.2"/></g><g fill="none" stroke="#1a6878" stroke-width="0.8" stroke-dasharray="1.3 1.1"><polyline points="9.5,0.8 9.5,12.8 1.5,19.4"/><polyline points="9.5,12.8 20.8,15.5"/></g></svg><svg class="a" style="left:1103px;top:32px" width="24" height="24" viewBox="0 0 24 24"><polygon points="0.8,6.5 9.5,0.8 20.8,2.5 14,9.3" fill="url(#gCube)"/><g fill="none" stroke="#1a6878" stroke-width="1" stroke-linejoin="round"><polygon points="0.8,6.5 9.5,0.8 20.8,2.5 20.8,15.5 14,23.2 1.5,19.4"/><polyline points="0.8,6.5 14,9.3 20.8,2.5"/><polyline points="14,9.3 14,23.2"/></g><g fill="none" stroke="#1a6878" stroke-width="0.8" stroke-dasharray="1.3 1.1"><polyline points="9.5,0.8 9.5,12.8 1.5,19.4"/><polyline points="9.5,12.8 20.8,15.5"/></g></svg><svg class="a" style="left:1139px;top:32px" width="24" height="24" viewBox="0 0 24 24"><polygon points="14,9.3 20.8,2.5 20.8,15.5 14,23.2" fill="url(#gCube)"/><g fill="none" stroke="#1a6878" stroke-width="1" stroke-linejoin="round"><polygon points="0.8,6.5 9.5,0.8 20.8,2.5 20.8,15.5 14,23.2 1.5,19.4"/><polyline points="0.8,6.5 14,9.3 20.8,2.5"/><polyline points="14,9.3 14,23.2"/></g><g fill="none" stroke="#1a6878" stroke-width="0.8" stroke-dasharray="1.3 1.1"><polyline points="9.5,0.8 9.5,12.8 1.5,19.4"/><polyline points="9.5,12.8 20.8,15.5"/></g></svg><svg class="a" style="left:1186px;top:32px" width="24" height="24" viewBox="0 0 24 24"><polygon points="9.5,0.8 20.8,2.5 20.8,15.5 9.5,12.8" fill="url(#gCube)"/><g fill="none" stroke="#1a6878" stroke-width="1" stroke-linejoin="round"><polygon points="0.8,6.5 9.5,0.8 20.8,2.5 20.8,15.5 14,23.2 1.5,19.4"/><polyline points="0.8,6.5 14,9.3 20.8,2.5"/><polyline points="14,9.3 14,23.2"/></g><g fill="none" stroke="#1a6878" stroke-width="0.8" stroke-dasharray="1.3 1.1"><polyline points="9.5,0.8 9.5,12.8 1.5,19.4"/><polyline points="9.5,12.8 20.8,15.5"/></g></svg><svg class="a" style="left:1222px;top:32px" width="24" height="24" viewBox="0 0 24 24"><polygon points="1.5,19.4 9.5,12.8 20.8,15.5 14,23.2" fill="url(#gCube)"/><g fill="none" stroke="#1a6878" stroke-width="1" stroke-linejoin="round"><polygon points="0.8,6.5 9.5,0.8 20.8,2.5 20.8,15.5 14,23.2 1.5,19.4"/><polyline points="0.8,6.5 14,9.3 20.8,2.5"/><polyline points="14,9.3 14,23.2"/></g><g fill="none" stroke="#1a6878" stroke-width="0.8" stroke-dasharray="1.3 1.1"><polyline points="9.5,0.8 9.5,12.8 1.5,19.4"/><polyline points="9.5,12.8 20.8,15.5"/></g></svg><svg class="a" style="left:1258px;top:32px" width="24" height="24" viewBox="0 0 24 24"><polygon points="0.8,6.5 9.5,0.8 9.5,12.8 1.5,19.4" fill="url(#gCube)"/><g fill="none" stroke="#1a6878" stroke-width="1" stroke-linejoin="round"><polygon points="0.8,6.5 9.5,0.8 20.8,2.5 20.8,15.5 14,23.2 1.5,19.4"/><polyline points="0.8,6.5 14,9.3 20.8,2.5"/><polyline points="14,9.3 14,23.2"/></g><g fill="none" stroke="#1a6878" stroke-width="0.8" stroke-dasharray="1.3 1.1"><polyline points="9.5,0.8 9.5,12.8 1.5,19.4"/><polyline points="9.5,12.8 20.8,15.5"/></g></svg><svg class="a" style="left:1304px;top:32px" width="24" height="24" viewBox="0 0 24 24"><path d="M2,7 L7,2 L23,18 L18,23 Z" fill="#2a98b8" stroke="#1a5a6a"/><g stroke="#1a5a6a" stroke-width="0.8"><line x1="6" y1="6" x2="8" y2="4"/><line x1="9" y1="9" x2="11" y2="7"/><line x1="12" y1="12" x2="14" y2="10"/><line x1="15" y1="15" x2="17" y2="13"/></g><path d="M3,9 L18,24" stroke="#333" stroke-width="1.5" opacity="0.6"/></svg><svg class="a" style="left:83px;top:72px" width="24" height="24" viewBox="0 0 24 24"><ellipse cx="17" cy="20" rx="6" ry="2" fill="#333" opacity="0.7"/><path d="M1,6 L7,2 L20,3 L19,16 L13,21 L1,18 Z" fill="#f0b000" stroke="#a07000" stroke-width="0.8"/><path d="M1,6 L14,8 L20,3 L7,2 Z" fill="#ffe040"/><path d="M14,8 L13,21" stroke="#a07000" stroke-width="0.8"/><path d="M1,6 L14,8 L14,21 L1,18 Z" fill="#ffd000"/></svg><svg class="a" style="left:119px;top:72px" width="24" height="24" viewBox="0 0 24 24"><ellipse cx="17" cy="20" rx="6" ry="2" fill="#333" opacity="0.7"/><path d="M1,4 L1,17 C1,22 19,22 19,17 L19,4 Z" fill="#f8c000" stroke="#a07000" stroke-width="0.8"/><ellipse cx="10" cy="4" rx="9" ry="3" fill="#ffe050" stroke="#a07000" stroke-width="0.8"/></svg><svg class="a" style="left:155px;top:72px" width="24" height="24" viewBox="0 0 24 24"><ellipse cx="17" cy="20" rx="6" ry="2" fill="#333" opacity="0.7"/><circle cx="10" cy="11" r="9" fill="#f8c000" stroke="#a07000" stroke-width="0.8"/><circle cx="8" cy="8" r="4" fill="#ffe060" opacity="0.7"/></svg><svg class="a" style="left:191px;top:72px" width="24" height="24" viewBox="0 0 24 24"><ellipse cx="17" cy="20" rx="6" ry="2" fill="#333" opacity="0.7"/><path d="M9,1 L17,19 C13,22 5,22 1,19 Z" fill="#f8c000" stroke="#a07000" stroke-width="0.8"/></svg><svg class="a" style="left:227px;top:72px" width="24" height="24" viewBox="0 0 24 24"><ellipse cx="17" cy="20" rx="6" ry="2" fill="#333" opacity="0.7"/><ellipse cx="10" cy="10" rx="10" ry="7.5" fill="#f8c000" stroke="#a07000" stroke-width="0.8"/><ellipse cx="10" cy="9" rx="5" ry="2" fill="#fff8c0" stroke="#a07000" stroke-width="0.6"/></svg><svg class="a" style="left:262px;top:72px" width="24" height="24" viewBox="0 0 24 24"><path d="M5,1 L9,8 L1,8 Z" fill="#f8c000"/><rect x="10" y="4" width="12" height="1.2" fill="#333"/><path d="M8,10 L18,10 L18,18 L8,18Z" fill="#f8c000" stroke="#a07000" stroke-width="0.6"/><circle cx="5" cy="17" r="4.5" fill="none" stroke="#222" stroke-width="1.3"/><circle cx="5" cy="17" r="2" fill="none" stroke="#222" stroke-width="1"/><circle cx="17" cy="18" r="5" fill="none" stroke="#2a3a90" stroke-width="1.2"/></svg><svg class="a" style="left:299px;top:72px" width="24" height="24" viewBox="0 0 24 24"><rect x="2" y="12" width="9" height="9" fill="#f8c000" stroke="#a07000" stroke-width="0.6"/><rect x="14" y="8" width="7" height="7" fill="#fff" stroke="#222" stroke-width="1.3"/><rect x="14" y="1" width="8" height="1.5" fill="#222"/><path d="M3,7 L5,5 L7,7 L5,9Z" fill="#222"/><path d="M8,5 L12,2" stroke="#e02020" stroke-width="1.8"/><path d="M18,3 L18,7" stroke="#e02020" stroke-width="1.8"/><path d="M20,20 L15,22" stroke="#e02020" stroke-width="1.8"/></svg><svg class="a" style="left:348px;top:73px" width="24" height="24" viewBox="0 0 24 24"><ellipse cx="18" cy="20" rx="6" ry="2" fill="#333" opacity="0.7"/><path d="M1,14 L8,11 L20,12 L20,20 L13,22 L1,20 Z" fill="#8ab0f0" stroke="#2a4aa0" stroke-width="0.8"/><path d="M11,1 L17,7 L13,7 L13,13 L9,13 L9,7 L5,7 Z" fill="#1a4ab8"/></svg><svg class="a" style="left:384px;top:73px" width="24" height="24" viewBox="0 0 24 24"><circle cx="10" cy="11" r="9" fill="#5a8ae0" stroke="#2a4aa0" stroke-width="1"/><circle cx="10" cy="11" r="2" fill="#fff"/><path d="M14,3 C20,5 20,12 18,15" fill="none" stroke="#1a3a90" stroke-width="1.5"/><path d="M10,11 L20,22 L10,21 Z" fill="#a8c0f0"/></svg><svg class="a" style="left:420px;top:73px" width="24" height="24" viewBox="0 0 24 24"><path d="M2,5 L8,2 L8,19 L2,21 Z" fill="#8ab0f0" stroke="#2a4aa0" stroke-width="0.8"/><path d="M14,2 L20,5 L20,21 L14,19 Z" fill="#2a50c0" stroke="#1a3a90" stroke-width="0.8"/><path d="M11,0 L11,23" stroke="#e02020" stroke-width="1.6" stroke-dasharray="3 2"/></svg><svg class="a" style="left:456px;top:73px" width="24" height="24" viewBox="0 0 24 24"><path d="M12,16 L22,14 L22,20 L12,22Z" fill="#444"/><path d="M1,6 C3,2 9,1 14,2 L22,4 L20,8 L12,7 L12,21 L2,19 Z" fill="#8ab0f0" stroke="#2a4aa0" stroke-width="0.8"/><path d="M1,6 C3,2 9,1 14,2 L22,4 L20,8 L12,7 C8,6 4,6 1,6Z" fill="#2a50c0"/></svg><svg class="a" style="left:492px;top:73px" width="24" height="24" viewBox="0 0 24 24"><path d="M12,16 L22,14 L22,20 L12,22Z" fill="#444"/><path d="M1,6 C3,2 9,1 14,2 L22,4 L20,8 L12,7 L12,21 L2,19 Z" fill="#8ab0f0" stroke="#2a4aa0" stroke-width="0.8"/><path d="M1,6 C3,2 9,1 14,2 L22,4 L20,8 L12,7 C8,6 4,6 1,6Z" fill="#2a50c0"/></svg><svg class="a" style="left:530px;top:73px" width="19" height="22" viewBox="0 0 19 22"><path d="M1,4 L18,0 L18,17 L1,21 Z" fill="#8ab0f0"/><path d="M1,4 L1,21 M18,0 L18,17" stroke="#f01010" stroke-width="1.8"/></svg><svg class="a" style="left:566px;top:73px" width="19" height="22" viewBox="0 0 19 22"><path d="M1,12 L10,1 L18,4 L17,17 L6,20 Z" fill="#2a50c0"/><path d="M10,1 L18,4 L17,17" fill="#8ab0f0"/><path d="M10,1 L18,4" stroke="#f01010" stroke-width="1.5"/><rect x="1" y="13" width="5" height="6" fill="#fff" stroke="#f01010" stroke-width="1.3"/></svg><svg class="a" style="left:599px;top:73px" width="24" height="24" viewBox="0 0 24 24"><path d="M5,16 C12,12 14,8 14,2 L22,2 C22,14 16,20 8,22 Z" fill="#2a50c0" stroke="#1a3a90" stroke-width="0.8"/><path d="M13,2 L23,2 M20,0 L17,5" stroke="#f01010" stroke-width="1.5"/><rect x="4" y="14" width="6" height="7" fill="#fff" stroke="#f01010" stroke-width="1.3"/><path d="M0,17 L4,17" stroke="#f01010" stroke-width="1.5"/></svg><svg class="a" style="left:636px;top:73px" width="21" height="22" viewBox="0 0 21 22"><path d="M9,0 L14,5 L11,5 L11,9 L7,9 L7,5 L4,5 Z" fill="#999"/><path d="M1,12 L9,9 L20,12 L12,15 Z" fill="#aaa" stroke="#888" stroke-width="0.6"/><path d="M1,18 L9,15 L20,18 L12,21 Z" fill="#bbb" stroke="#888" stroke-width="0.6"/></svg><svg class="a" style="left:672px;top:73px" width="24" height="24" viewBox="0 0 24 24"><path d="M1,10 L8,6 L21,7 L21,15 L14,19 L1,17 Z" fill="#d8d8d8" stroke="#999" stroke-width="0.8"/><path d="M1,10 L14,11 L21,7 L8,6Z" fill="#eee"/><ellipse cx="18" cy="18" rx="5" ry="2" fill="#999" opacity="0.6"/></svg><svg class="a" style="left:720px;top:73px" width="24" height="24" viewBox="0 0 24 24"><ellipse cx="18" cy="19" rx="6" ry="2.5" fill="#333" opacity="0.6"/><circle cx="15" cy="7" r="6.5" fill="#8ab0f0" stroke="#5a80d0" stroke-width="0.6"/><circle cx="8" cy="14" r="7.5" fill="#1a48c0" stroke="#0a2a80" stroke-width="0.8"/><circle cx="6" cy="11" r="3" fill="#5a8ae0" opacity="0.6"/></svg><svg class="a" style="left:756px;top:73px" width="24" height="24" viewBox="0 0 24 24"><ellipse cx="12" cy="20" rx="7" ry="2" fill="#999" opacity="0.5"/><circle cx="8" cy="14" r="7.5" fill="#8a8a8a"/><circle cx="15" cy="7" r="6.5" fill="#fff" stroke="#666" stroke-width="1"/></svg><svg class="a" style="left:793px;top:73px" width="24" height="24" viewBox="0 0 24 24"><ellipse cx="12" cy="20" rx="7" ry="2" fill="#999" opacity="0.5"/><circle cx="8" cy="14" r="7.5" fill="#808080"/><circle cx="15" cy="7" r="6.5" fill="#888"/></svg><svg class="a" style="left:829px;top:73px" width="24" height="24" viewBox="0 0 24 24"><circle cx="8" cy="14" r="7.5" fill="#fff" stroke="#666" stroke-width="1"/><circle cx="15" cy="7" r="6.5" fill="none" stroke="#666" stroke-width="1"/><path d="M9,8 C12,8 14,11 14,13 C11,13 9,10 9,8Z" fill="#888"/></svg><svg class="a" style="left:865px;top:73px" width="24" height="24" viewBox="0 0 24 24"><circle cx="11" cy="4" r="4" fill="#ddd" stroke="#999"/><path d="M11,5 L18,21 C14,23 6,23 3,21 Z" fill="#8a8a8a"/><path d="M13,8 L22,15" stroke="#666" stroke-width="1.2"/></svg><svg class="a" style="left:900px;top:73px" width="24" height="24" viewBox="0 0 24 24"><path d="M2,4 L8,1 L20,3 L20,18 L14,22 L2,19 Z" fill="#ccc" stroke="#888" stroke-width="0.8"/><rect x="5" y="6" width="10" height="11" fill="#999" stroke="#777"/><rect x="7" y="8" width="6" height="7" fill="#ddd"/></svg><svg class="a" style="left:936px;top:73px" width="24" height="24" viewBox="0 0 24 24"><path d="M1,8 L12,4 L23,8 L12,12Z" fill="#bbb" stroke="#999" stroke-width="0.5"/><path d="M1,15 L12,11 L23,15 L12,19Z" fill="#bbb" stroke="#999" stroke-width="0.5"/><rect x="7" y="1" width="10" height="21" rx="1" fill="#888"/><rect x="7" y="1" width="10" height="4" fill="#aaa"/></svg><svg class="a" style="left:985px;top:73px" width="24" height="24" viewBox="0 0 24 24"><rect x="2" y="3" width="17" height="15" rx="4" fill="#c8c8c8" stroke="#555" stroke-width="1"/><circle cx="9" cy="11" r="6" fill="#111"/><path d="M3,10 A6,6 0 0 1 15,10 Z" fill="#f0e020"/><path d="M14,17 L22,22" stroke="#d8c040" stroke-width="2.5"/></svg><svg class="a" style="left:1021px;top:73px" width="24" height="24" viewBox="0 0 24 24"><rect x="2" y="3" width="17" height="15" rx="4" fill="#c8c8c8" stroke="#555" stroke-width="1"/><circle cx="9" cy="11" r="6" fill="#111"/><path d="M3,10 A6,6 0 0 1 15,10 Z" fill="#f0e020"/><path d="M14,17 L22,22" stroke="#d8c040" stroke-width="2.5"/><path d="M1,3 L8,21 L22,6" fill="none" stroke="#c02020" stroke-width="2.2"/><path d="M8,3 C12,0 18,1 19,5" fill="none" stroke="#2a6ad0" stroke-width="1.5"/></svg><svg class="a" style="left:1068px;top:73px" width="24" height="24" viewBox="0 0 24 24"><rect x="2" y="3" width="17" height="15" rx="4" fill="#c8c8c8" stroke="#555" stroke-width="1"/><circle cx="9" cy="11" r="6" fill="#111"/><path d="M3,10 A6,6 0 0 1 15,10 Z" fill="#f0e020"/><path d="M14,17 L22,22" stroke="#d8c040" stroke-width="2.5"/><path d="M4,21 L21,4" stroke="#d8c070" stroke-width="4"/><path d="M4,21 L6,19" stroke="#c06060" stroke-width="4"/></svg><svg class="a" style="left:1104px;top:73px" width="24" height="24" viewBox="0 0 24 24"><path d="M1,3 L22,3 L22,22 M1,3 L1,22" fill="none" stroke="#2a8a2a" stroke-width="2.5"/><rect x="2" y="3" width="17" height="15" rx="4" fill="#c8c8c8" stroke="#555" stroke-width="1"/><circle cx="9" cy="11" r="6" fill="#111"/><path d="M3,10 A6,6 0 0 1 15,10 Z" fill="#f0e020"/><path d="M14,17 L22,22" stroke="#d8c040" stroke-width="2.5"/><path d="M3,10 L13,1 L22,12 L11,22 Z" fill="none" stroke="#c03030" stroke-width="2.2"/></svg><svg class="a" style="left:1140px;top:73px" width="24" height="24" viewBox="0 0 24 24"><rect x="2" y="3" width="17" height="15" rx="4" fill="#c8c8c8" stroke="#555" stroke-width="1"/><circle cx="9" cy="11" r="6" fill="#111"/><path d="M3,10 A6,6 0 0 1 15,10 Z" fill="#f0e020"/><path d="M14,17 L22,22" stroke="#d8c040" stroke-width="2.5"/><path d="M3,10 L13,1 L22,12 L11,22 Z" fill="none" stroke="#c03030" stroke-width="2.2"/></svg><svg class="a" style="left:1176px;top:73px" width="24" height="24" viewBox="0 0 24 24"><path d="M1,3 L22,3 L22,22 M1,3 L1,22" fill="none" stroke="#2a8a2a" stroke-width="2.5"/><rect x="2" y="3" width="17" height="15" rx="4" fill="#c8c8c8" stroke="#555" stroke-width="1"/><circle cx="9" cy="11" r="6" fill="#111"/><path d="M3,10 A6,6 0 0 1 15,10 Z" fill="#f0e020"/><path d="M14,17 L22,22" stroke="#d8c040" stroke-width="2.5"/></svg>
<div class="a t" style="left:67px;top:109px;font-size:15px;color:#3c3c3c">Combo View</div><svg class="a" style="left:248px;top:111px" width="11" height="11" viewBox="0 0 11 11"><rect x="0.5" y="0.5" width="10" height="10" rx="2" fill="none" stroke="#6a6a6a"/><rect x="4" y="2.5" width="4.5" height="4.5" fill="none" stroke="#6a6a6a" stroke-width="1.1"/><rect x="2.5" y="4" width="4.5" height="4.5" fill="#f2f1f0" stroke="#6a6a6a" stroke-width="1.1"/></svg><svg class="a" style="left:265px;top:111px" width="11" height="11" viewBox="0 0 11 11"><rect x="0.5" y="0.5" width="10" height="10" rx="2" fill="none" stroke="#6a6a6a"/><path d="M3,3 L8,8 M8,3 L3,8" stroke="#5a5a5a" stroke-width="1.9"/></svg><div class="a" style="left:124px;top:132px;width:51px;height:27px;border:1px solid #c0bdb8;border-bottom:none;border-radius:4px 4px 0 0;background:linear-gradient(#f4f3f2,#dcdad6)"></div><div class="a t" style="left:132px;top:137px;font-size:15px">Tasks</div><div class="a" style="left:65px;top:129px;width:59px;height:31px;border:1px solid #bcb9b3;border-bottom:none;border-radius:4px 4px 0 0;background:linear-gradient(#fcfcfc,#f2f1f0)"></div><div class="a t" style="left:74px;top:136px;font-size:15px">Model</div><div class="a" style="left:65px;top:158px;width:214px;height:873px;border:1px solid #c4c1bb;border-radius:0 4px 4px 4px;background:#f2f1f0"></div><div class="a" style="left:66px;top:158px;width:57px;height:2px;background:#f6f5f4"></div><div class="a" style="left:67px;top:160px;width:210px;height:396px;border:1px solid #b9b6b0;background:#fff"></div><div class="a" style="left:68px;top:161px;width:208px;height:24px;background:#f2f1f0"></div><div class="a" style="left:68px;top:161px;width:146px;height:24px;background:linear-gradient(#fefefe,#eeedeb);border-right:1px solid #cfccc7;border-bottom:1px solid #cfccc7"></div><div class="a t" style="left:72px;top:166px;font-size:15px">Labels &amp; Attributes</div><div class="a t" style="left:72px;top:188px;font-size:15px">Application</div><svg class="a" style="left:77px;top:210px" width="9" height="8" viewBox="0 0 9 8"><path d="M0.5,0.5 L7.5,0.5 L4,6.5 Z" fill="#6a6a6a" stroke="#3a3a3a" stroke-width="0.8"/></svg><svg class="a" style="left:92px;top:207px" width="14" height="15" viewBox="0 0 14 15"><rect x="0.5" y="0.5" width="12" height="14" fill="#f0f0f0" stroke="#b0b0b0"/><circle cx="8" cy="5" r="3.2" fill="#e01818"/><path d="M2,8 L4,6.5 L9.5,6.5 L9.5,12 L8,13.5 L2,13.5 Z" fill="#3a4ec8"/><path d="M2,8 L8,8 L9.5,6.5 M8,8 L8,13.5" fill="none" stroke="#1a2a90" stroke-width="0.7"/></svg><div class="a t" style="left:113px;top:207px;font-size:15px;font-weight:bold">Example</div><svg class="a" style="left:97px;top:229px" width="7" height="9" viewBox="0 0 7 9"><path d="M0.5,0.5 L6,4.5 L0.5,8.5 Z" fill="#8a8a8a" stroke="#555" stroke-width="0.8"/></svg><svg class="a" style="left:111px;top:226px" width="16" height="15" viewBox="0 0 16 15"><ellipse cx="6" cy="9" rx="5.5" ry="5" fill="#1a3ab0"/><ellipse cx="10" cy="5.5" rx="5.5" ry="5" fill="#2a58d8"/><ellipse cx="9" cy="4" rx="2.5" ry="1.8" fill="#8ab0ff" opacity="0.7"/><ellipse cx="7" cy="13" rx="5" ry="1.5" fill="#222" opacity="0.4"/></svg><div class="a t" style="left:133px;top:226px;font-size:15px">Union</div><svg class="a" style="left:112px;top:246px" width="14" height="14" viewBox="0 0 14 14"><path d="M1,4 L4,1 L13,1 L13,10 L10,13 L1,13 Z" fill="#0000ee" stroke="#000028" stroke-width="1.1"/><path d="M1,4 L10,4 L13,1 M10,4 L10,13" fill="none" stroke="#000028" stroke-width="1.1"/><path d="M1.6,4.6 L9.5,4.6 L9.5,12.5 L1.6,12.5Z" fill="#1a1aff"/></svg><div class="a t" style="left:133px;top:245px;font-size:15px">Cylinder</div><svg class="a" style="left:112px;top:265px" width="14" height="14" viewBox="0 0 14 14"><path d="M1,4 L4,1 L13,1 L13,10 L10,13 L1,13 Z" fill="#0000ee" stroke="#000028" stroke-width="1.1"/><path d="M1,4 L10,4 L13,1 M10,4 L10,13" fill="none" stroke="#000028" stroke-width="1.1"/><path d="M1.6,4.6 L9.5,4.6 L9.5,12.5 L1.6,12.5Z" fill="#1a1aff"/></svg><div class="a t" style="left:133px;top:264px;font-size:15px;font-weight:bold">Vector020</div><svg class="a" style="left:169px;top:557px" width="8" height="5" viewBox="0 0 8 5"><g stroke="#bcb9b3"><line x1="0.5" y1="0" x2="0.5" y2="5"/><line x1="3.5" y1="0" x2="3.5" y2="5"/><line x1="6.5" y1="0" x2="6.5" y2="5"/></g></svg><div class="a" style="left:67px;top:562px;width:210px;height:437px;border:1px solid #c4c1bb;border-radius:3px;background:#f2f1f0"></div><div class="a" style="left:68px;top:564px;width:207px;height:434px;border:1px solid #b9b6b0;background:#fff"></div><div class="a" style="left:69px;top:565px;width:205px;height:24px;background:linear-gradient(#fdfdfd,#eceae7);border-bottom:1px solid #c8c5c0"></div><div class="a" style="left:169px;top:566px;width:1px;height:22px;background:#d0cdc8"></div><div class="a t" style="left:74px;top:570px;font-size:15px">Property</div><div class="a t" style="left:174px;top:570px;font-size:15px">Value</div><svg class="a" style="left:67px;top:998px" width="100" height="32" viewBox="0 0 100 32"><path d="M47,1 L37,28 C36,30 35,30 33,30 L14,30 C12,30 11,30 10,28 L2,1" fill="none" stroke="#3a3a3a" stroke-width="1"/><path d="M3,1 L11,28 C12,29.5 13,30 15,30 L33,30 C35,30 36,29.5 37,28 L46,1 Z" fill="#fff"/><path d="M47,1 L37,28 C36,30 35,30 33,30 L14,30 C12,30 11,30 10,28 L2,1" fill="none" stroke="#3a3a3a" stroke-width="1"/><path d="M51,3 L59,26 C60,28 61,28 63,28 L81,28 C83,28 84,28 85,26 L96,3" fill="none" stroke="#3a3a3a" stroke-width="1"/></svg><div class="a t" style="left:75px;top:1005px;font-size:15px;color:#3c3c3c">View</div><div class="a t" style="left:124px;top:1004px;font-size:15px;color:#3c3c3c">Data</div><svg class="a" style="left:279px;top:564px" width="4" height="8" viewBox="0 0 4 8"><g stroke="#bcb9b3"><line x1="0" y1="0.5" x2="4" y2="0.5"/><line x1="0" y1="3.5" x2="4" y2="3.5"/><line x1="0" y1="6.5" x2="4" y2="6.5"/></g></svg>
<svg class="a" style="left:289px;top:128px;overflow:hidden" width="810" height="866" viewBox="289 128 810 866"><rect x="289" y="128" width="810" height="866" fill="url(#gBg)"/><defs><linearGradient id="gBg" x1="0" y1="0" x2="0" y2="1"><stop offset="0" stop-color="#333366"/><stop offset="1" stop-color="#a9a9c1"/></linearGradient></defs>
<defs>
<linearGradient id="gCyl" x1="-108" y1="0" x2="108" y2="0" gradientUnits="userSpaceOnUse">
 <stop offset="0" stop-color="#053a05"/><stop offset="0.04" stop-color="#066806"/><stop offset="0.13" stop-color="#09a409"/>
 <stop offset="0.3" stop-color="#0cd00c"/><stop offset="0.5" stop-color="#0de20d"/><stop offset="0.68" stop-color="#0cd80c"/><stop offset="0.82" stop-color="#0aaa0a"/>
 <stop offset="0.93" stop-color="#066806"/><stop offset="1" stop-color="#033003"/>
</linearGradient>
<linearGradient id="gShaft" x1="0" y1="0" x2="1" y2="0">
 <stop offset="0" stop-color="#00005a"/><stop offset="0.12" stop-color="#0000a8"/><stop offset="0.4" stop-color="#0a10e6"/>
 <stop offset="0.6" stop-color="#0a10e0"/><stop offset="0.85" stop-color="#0000a0"/><stop offset="1" stop-color="#00005a"/>
</linearGradient>
<linearGradient id="gCone" x1="-41" y1="0" x2="41" y2="0" gradientUnits="userSpaceOnUse">
 <stop offset="0" stop-color="#000050"/><stop offset="0.08" stop-color="#0000b8"/><stop offset="0.3" stop-color="#0810f8"/>
 <stop offset="0.6" stop-color="#0810f0"/><stop offset="0.85" stop-color="#0000a8"/><stop offset="1" stop-color="#000050"/>
</linearGradient>
<linearGradient id="gArr" x1="0" y1="-1" x2="0" y2="1" gradientUnits="objectBoundingBox">
 <stop offset="0" stop-color="#8a0000"/><stop offset="0.5" stop-color="#f01818"/><stop offset="1" stop-color="#8a0000"/>
</linearGradient>
</defs><path d="M846.7,475.4 L835.7,461.7 L837.3,460.4 L828.7,455.6 L831.5,465.0 L833.2,463.7 L844.2,477.4 Z" fill="#e01414" stroke="#1a0a0a" stroke-width="1.15" stroke-linejoin="round"/><ellipse cx="833.7" cy="461.8" rx="1.6" ry="3.4" transform="rotate(-128.7 833.7 461.8)" fill="#c01010" stroke="#1a0a0a" stroke-width="1"/><circle cx="845.4" cy="476.4" r="1.7" fill="#d01010" stroke="#1a0a0a" stroke-width="1"/><path d="M528.7,601.0 L531.4,619.0 L529.3,619.3 L534.4,628.0 L536.7,618.2 L534.6,618.5 L531.9,600.5 Z" fill="#e01414" stroke="#1a0a0a" stroke-width="1.15" stroke-linejoin="round"/><ellipse cx="533.2" cy="619.9" rx="1.6" ry="3.4" transform="rotate(81.5 533.2 619.9)" fill="#c01010" stroke="#1a0a0a" stroke-width="1"/><circle cx="530.3" cy="600.8" r="1.7" fill="#d01010" stroke="#1a0a0a" stroke-width="1"/><path d="M539.5,563.1 L533.6,583.6 L531.6,583.0 L532.1,594.5 L538.7,585.0 L536.7,584.4 L542.6,564.0 Z" fill="#e01414" stroke="#1a0a0a" stroke-width="1.15" stroke-linejoin="round"/><ellipse cx="534.8" cy="585.2" rx="1.6" ry="3.4" transform="rotate(106.2 534.8 585.2)" fill="#c01010" stroke="#1a0a0a" stroke-width="1"/><circle cx="541.0" cy="563.6" r="1.7" fill="#d01010" stroke="#1a0a0a" stroke-width="1"/><path d="M565.1,524.7 L550.6,546.3 L548.9,545.2 L545.3,557.2 L555.0,549.3 L553.3,548.1 L567.7,526.5 Z" fill="#e01414" stroke="#1a0a0a" stroke-width="1.15" stroke-linejoin="round"/><ellipse cx="551.3" cy="548.2" rx="1.6" ry="3.4" transform="rotate(123.7 551.3 548.2)" fill="#c01010" stroke="#1a0a0a" stroke-width="1"/><circle cx="566.4" cy="525.6" r="1.7" fill="#d01010" stroke="#1a0a0a" stroke-width="1"/><path d="M602.8,489.3 L580.3,510.3 L578.9,508.7 L572.7,519.6 L584.0,514.1 L582.5,512.6 L605.0,491.6 Z" fill="#e01414" stroke="#1a0a0a" stroke-width="1.15" stroke-linejoin="round"/><ellipse cx="580.6" cy="512.3" rx="1.6" ry="3.4" transform="rotate(136.9 580.6 512.3)" fill="#c01010" stroke="#1a0a0a" stroke-width="1"/><circle cx="603.9" cy="490.4" r="1.7" fill="#d01010" stroke="#1a0a0a" stroke-width="1"/><path d="M649.0,460.2 L620.9,477.8 L619.8,476.0 L611.6,485.6 L623.7,482.3 L622.6,480.5 L650.7,462.9 Z" fill="#e01414" stroke="#1a0a0a" stroke-width="1.15" stroke-linejoin="round"/><ellipse cx="620.7" cy="479.8" rx="1.6" ry="3.4" transform="rotate(147.9 620.7 479.8)" fill="#c01010" stroke="#1a0a0a" stroke-width="1"/><circle cx="649.8" cy="461.6" r="1.7" fill="#d01010" stroke="#1a0a0a" stroke-width="1"/><path d="M699.1,440.4 L668.8,452.4 L668.0,450.4 L658.2,458.3 L670.7,457.3 L670.0,455.3 L700.3,443.4 Z" fill="#e01414" stroke="#1a0a0a" stroke-width="1.15" stroke-linejoin="round"/><ellipse cx="668.3" cy="454.3" rx="1.6" ry="3.4" transform="rotate(158.5 668.3 454.3)" fill="#c01010" stroke="#1a0a0a" stroke-width="1"/><circle cx="699.7" cy="441.9" r="1.7" fill="#d01010" stroke="#1a0a0a" stroke-width="1"/><path d="M748.5,431.7 L719.5,436.8 L719.2,434.7 L708.0,440.4 L720.4,442.0 L720.1,439.9 L749.0,434.8 Z" fill="#e01414" stroke="#1a0a0a" stroke-width="1.15" stroke-linejoin="round"/><ellipse cx="718.6" cy="438.6" rx="1.6" ry="3.4" transform="rotate(170.0 718.6 438.6)" fill="#c01010" stroke="#1a0a0a" stroke-width="1"/><circle cx="748.7" cy="433.3" r="1.7" fill="#d01010" stroke="#1a0a0a" stroke-width="1"/><path d="M792.1,435.0 L768.1,433.1 L768.3,431.0 L756.0,433.8 L767.7,438.4 L767.9,436.3 L791.9,438.1 Z" fill="#e01414" stroke="#1a0a0a" stroke-width="1.15" stroke-linejoin="round"/><ellipse cx="766.8" cy="434.6" rx="1.6" ry="3.4" transform="rotate(-175.6 766.8 434.6)" fill="#c01010" stroke="#1a0a0a" stroke-width="1"/><circle cx="792.0" cy="436.6" r="1.7" fill="#d01010" stroke="#1a0a0a" stroke-width="1"/><path d="M826.0,450.0 L807.7,441.8 L808.6,439.9 L797.6,439.0 L805.5,446.6 L806.4,444.7 L824.7,452.9 Z" fill="#e01414" stroke="#1a0a0a" stroke-width="1.15" stroke-linejoin="round"/><ellipse cx="806.0" cy="442.8" rx="1.6" ry="3.4" transform="rotate(-155.9 806.0 442.8)" fill="#c01010" stroke="#1a0a0a" stroke-width="1"/><circle cx="825.3" cy="451.4" r="1.7" fill="#d01010" stroke="#1a0a0a" stroke-width="1"/><g transform="translate(619.5,425.0) rotate(-28.6)"><path d="M-17.6,250 L-17.6,592.0 A17.6 10.2608 0 0 0 17.6,592.0 L17.6,250 A17.6 10.2608 0 0 0 -17.6,250 Z" fill="url(#gShaft)"/><path d="M-108.0,0 L-108.0,296.0 A108.0 63.0 0 0 0 108.0,296.0 L108.0,0 A108.0 63.0 0 0 0 -108.0,0 Z" fill="url(#gCyl)" stroke="#111" stroke-width="1.6"/><ellipse cx="0" cy="0" rx="108.0" ry="63.0" fill="#0b9c0b" stroke="#111" stroke-width="1.6"/><path d="M-17.6,-178.0 L-17.6,0 A17.6 10.2608 0 0 0 17.6,0 L17.6,-178.0 Z" fill="url(#gShaft)"/><path d="M0,-296.0 L41.54,-182.88 A42.5 25.0 0 1 1 -41.54,-182.88 Z" fill="url(#gCone)"/></g><path d="M852.0,508.9 L849.3,490.9 L851.4,490.6 L846.3,481.9 L844.0,491.7 L846.1,491.4 L848.8,509.4 Z" fill="#e01414" stroke="#1a0a0a" stroke-width="1.15" stroke-linejoin="round"/><ellipse cx="847.5" cy="490.0" rx="1.6" ry="3.4" transform="rotate(-98.5 847.5 490.0)" fill="#c01010" stroke="#1a0a0a" stroke-width="1"/><circle cx="850.4" cy="509.1" r="1.7" fill="#d01010" stroke="#1a0a0a" stroke-width="1"/><path d="M841.2,546.7 L847.1,526.3 L849.1,526.9 L848.6,515.4 L842.0,524.8 L844.0,525.4 L838.1,545.8 Z" fill="#e01414" stroke="#1a0a0a" stroke-width="1.15" stroke-linejoin="round"/><ellipse cx="845.9" cy="524.7" rx="1.6" ry="3.4" transform="rotate(-73.8 845.9 524.7)" fill="#c01010" stroke="#1a0a0a" stroke-width="1"/><circle cx="839.6" cy="546.3" r="1.7" fill="#d01010" stroke="#1a0a0a" stroke-width="1"/><path d="M815.6,585.2 L830.1,563.6 L831.8,564.7 L835.4,552.7 L825.7,560.6 L827.4,561.8 L813.0,583.4 Z" fill="#e01414" stroke="#1a0a0a" stroke-width="1.15" stroke-linejoin="round"/><ellipse cx="829.4" cy="561.7" rx="1.6" ry="3.4" transform="rotate(-56.3 829.4 561.7)" fill="#c01010" stroke="#1a0a0a" stroke-width="1"/><circle cx="814.3" cy="584.3" r="1.7" fill="#d01010" stroke="#1a0a0a" stroke-width="1"/><path d="M777.9,620.6 L800.4,599.6 L801.8,601.1 L808.0,590.2 L796.7,595.7 L798.2,597.3 L775.7,618.3 Z" fill="#e01414" stroke="#1a0a0a" stroke-width="1.15" stroke-linejoin="round"/><ellipse cx="800.1" cy="597.6" rx="1.6" ry="3.4" transform="rotate(-43.1 800.1 597.6)" fill="#c01010" stroke="#1a0a0a" stroke-width="1"/><circle cx="776.8" cy="619.5" r="1.7" fill="#d01010" stroke="#1a0a0a" stroke-width="1"/><path d="M731.7,649.6 L759.8,632.1 L760.9,633.8 L769.1,624.3 L757.0,627.6 L758.1,629.3 L730.0,646.9 Z" fill="#e01414" stroke="#1a0a0a" stroke-width="1.15" stroke-linejoin="round"/><ellipse cx="760.0" cy="630.1" rx="1.6" ry="3.4" transform="rotate(-32.1 760.0 630.1)" fill="#c01010" stroke="#1a0a0a" stroke-width="1"/><circle cx="730.9" cy="648.3" r="1.7" fill="#d01010" stroke="#1a0a0a" stroke-width="1"/><path d="M681.5,669.5 L711.9,657.5 L712.7,659.5 L722.5,651.6 L710.0,652.6 L710.7,654.5 L680.4,666.5 Z" fill="#e01414" stroke="#1a0a0a" stroke-width="1.15" stroke-linejoin="round"/><ellipse cx="712.4" cy="655.6" rx="1.6" ry="3.4" transform="rotate(-21.5 712.4 655.6)" fill="#c01010" stroke="#1a0a0a" stroke-width="1"/><circle cx="681.0" cy="668.0" r="1.7" fill="#d01010" stroke="#1a0a0a" stroke-width="1"/><path d="M632.2,678.2 L661.2,673.1 L661.5,675.2 L672.7,669.5 L660.3,667.9 L660.6,670.0 L631.7,675.0 Z" fill="#e01414" stroke="#1a0a0a" stroke-width="1.15" stroke-linejoin="round"/><ellipse cx="662.1" cy="671.3" rx="1.6" ry="3.4" transform="rotate(-10.0 662.1 671.3)" fill="#c01010" stroke="#1a0a0a" stroke-width="1"/><circle cx="632.0" cy="676.6" r="1.7" fill="#d01010" stroke="#1a0a0a" stroke-width="1"/><path d="M588.6,674.9 L612.6,676.8 L612.4,678.9 L624.7,676.1 L613.0,671.5 L612.8,673.6 L588.8,671.7 Z" fill="#e01414" stroke="#1a0a0a" stroke-width="1.15" stroke-linejoin="round"/><ellipse cx="613.9" cy="675.3" rx="1.6" ry="3.4" transform="rotate(4.4 613.9 675.3)" fill="#c01010" stroke="#1a0a0a" stroke-width="1"/><circle cx="588.7" cy="673.3" r="1.7" fill="#d01010" stroke="#1a0a0a" stroke-width="1"/><path d="M554.7,659.9 L573.0,668.1 L572.1,670.0 L583.1,670.9 L575.2,663.3 L574.3,665.2 L556.0,657.0 Z" fill="#e01414" stroke="#1a0a0a" stroke-width="1.15" stroke-linejoin="round"/><ellipse cx="574.7" cy="667.1" rx="1.6" ry="3.4" transform="rotate(24.1 574.7 667.1)" fill="#c01010" stroke="#1a0a0a" stroke-width="1"/><circle cx="555.4" cy="658.5" r="1.7" fill="#d01010" stroke="#1a0a0a" stroke-width="1"/><path d="M534.0,634.5 L545.0,648.2 L543.4,649.5 L551.9,654.3 L549.2,644.9 L547.5,646.2 L536.5,632.5 Z" fill="#e01414" stroke="#1a0a0a" stroke-width="1.15" stroke-linejoin="round"/><ellipse cx="547.0" cy="648.1" rx="1.6" ry="3.4" transform="rotate(51.3 547.0 648.1)" fill="#c01010" stroke="#1a0a0a" stroke-width="1"/><circle cx="535.2" cy="633.5" r="1.7" fill="#d01010" stroke="#1a0a0a" stroke-width="1"/><g stroke-linecap="round"><line x1="1058.7" y1="952.9" x2="1052" y2="940" stroke="#1a8a1a" stroke-width="2.5"/><line x1="1058.7" y1="952.9" x2="1050" y2="937" stroke="#1a1a88" stroke-width="2.2"/><path d="M1045.6,929.8 L1053.4,936.5 L1047.2,940 Z" fill="#1a1a88" stroke="#1a1a88" stroke-width="1"/><path d="M1053.5,941.2 L1057.8,944.2 L1056.5,948.5 Z" fill="#1a8a1a"/><line x1="1058.7" y1="952.9" x2="1076" y2="944" stroke="#8a1a1a" stroke-width="2"/><path d="M1083.7,940.8 L1074.8,942 L1077.3,947 Z" fill="#8a1a1a" stroke="#8a1a1a" stroke-width="1"/></g><text x="1055.5" y="942" font-family="Liberation Sans" font-size="9" fill="#000">Y</text><text x="1085.5" y="941" font-family="Liberation Sans" font-size="9" fill="#000">X</text></svg>
<div class="a t" style="left:1110px;top:137px;width:38px;text-align:right;font-size:13px;color:#3a3a3a">1</div><div class="a code" style="left:1153px;top:136px"><span class="k">import</span> pyooml</div><div class="a t" style="left:1110px;top:154px;width:38px;text-align:right;font-size:13px;color:#3a3a3a">2</div><div class="a code" style="left:1153px;top:153px"><span class="k">import</span> FreeCAD</div><div class="a t" style="left:1110px;top:171px;width:38px;text-align:right;font-size:13px;color:#3a3a3a">3</div><div class="a code" style="left:1153px;top:170px"><span class="k">import</span> math</div><div class="a t" style="left:1110px;top:188px;width:38px;text-align:right;font-size:13px;color:#3a3a3a">4</div><div class="a code" style="left:1153px;top:187px"><span class="k">from</span> pyooml <span class="k">import</span> svector</div><div class="a t" style="left:1110px;top:205px;width:38px;text-align:right;font-size:13px;color:#3a3a3a">5</div><div class="a code" style="left:1153px;top:204px"><span class="k">from</span> FreeCAD <span class="k">import</span> Vector</div><div class="a t" style="left:1110px;top:222px;width:38px;text-align:right;font-size:13px;color:#3a3a3a">6</div><div class="a t" style="left:1110px;top:239px;width:38px;text-align:right;font-size:13px;color:#3a3a3a">7</div><div class="a code" style="left:1153px;top:238px"><span class="c">#-- create a new document</span></div><div class="a t" style="left:1110px;top:256px;width:38px;text-align:right;font-size:13px;color:#3a3a3a">8</div><div class="a code" style="left:1153px;top:255px">doc <span class="eq">=</span> newdoc<span class="o">(</span><span class="o">)</span></div><div class="a t" style="left:1110px;top:273px;width:38px;text-align:right;font-size:13px;color:#3a3a3a">9</div><div class="a t" style="left:1110px;top:290px;width:38px;text-align:right;font-size:13px;color:#3a3a3a">10</div><div class="a code" style="left:1153px;top:289px"><span class="c">#-------------------- Vector field parameters</span></div><div class="a t" style="left:1110px;top:307px;width:38px;text-align:right;font-size:13px;color:#3a3a3a">11</div><div class="a code" style="left:1153px;top:306px"><span class="c">#-- Number of vectors</span></div><div class="a t" style="left:1110px;top:324px;width:38px;text-align:right;font-size:13px;color:#3a3a3a">12</div><div class="a code" style="left:1153px;top:323px">N <span class="eq">=</span> <span class="n">20</span></div><div class="a t" style="left:1110px;top:341px;width:38px;text-align:right;font-size:13px;color:#3a3a3a">13</div><div class="a t" style="left:1110px;top:358px;width:38px;text-align:right;font-size:13px;color:#3a3a3a">14</div><div class="a code" style="left:1153px;top:357px"><span class="c">#-- Radius</span></div><div class="a t" style="left:1110px;top:375px;width:38px;text-align:right;font-size:13px;color:#3a3a3a">15</div><div class="a code" style="left:1153px;top:374px">r <span class="eq">=</span> <span class="n">20</span></div><div class="a t" style="left:1110px;top:392px;width:38px;text-align:right;font-size:13px;color:#3a3a3a">16</div><div class="a t" style="left:1110px;top:409px;width:38px;text-align:right;font-size:13px;color:#3a3a3a">17</div><div class="a code" style="left:1153px;top:408px"><span class="c">#-------------- Calculate internal parameters</span></div><div class="a t" style="left:1110px;top:426px;width:38px;text-align:right;font-size:13px;color:#3a3a3a">18</div><div class="a code" style="left:1153px;top:425px"><span class="c">#-- Sector angle</span></div><div class="a t" style="left:1110px;top:443px;width:38px;text-align:right;font-size:13px;color:#3a3a3a">19</div><div class="a code" style="left:1153px;top:442px">ang <span class="eq">=</span> <span class="n">360.0</span><span class="o">/</span>N</div><div class="a t" style="left:1110px;top:460px;width:38px;text-align:right;font-size:13px;color:#3a3a3a">20</div><div class="a t" style="left:1110px;top:477px;width:38px;text-align:right;font-size:13px;color:#3a3a3a">21</div><div class="a code" style="left:1153px;top:476px"><span class="c">#-- Initial radial vector</span></div><div class="a t" style="left:1110px;top:494px;width:38px;text-align:right;font-size:13px;color:#3a3a3a">22</div><div class="a code" style="left:1153px;top:493px">v1 <span class="eq">=</span> Vector<span class="o">(</span>r<span class="o">,</span> <span class="n">0</span><span class="o">,</span> <span class="n">0</span><span class="o">)</span></div><div class="a t" style="left:1110px;top:511px;width:38px;text-align:right;font-size:13px;color:#3a3a3a">23</div><div class="a t" style="left:1110px;top:528px;width:38px;text-align:right;font-size:13px;color:#3a3a3a">24</div><div class="a code" style="left:1153px;top:527px"><span class="c">#-- Radial vector rotated ang around z axis</span></div><div class="a t" style="left:1110px;top:545px;width:38px;text-align:right;font-size:13px;color:#3a3a3a">25</div><div class="a code" style="left:1153px;top:544px">vr <span class="eq">=</span> Vector<span class="o">(</span>r <span class="o">*</span> math<span class="o">.</span>cos<span class="o">(</span>math<span class="o">.</span>radians<span class="o">(</span>ang<span class="o">)</span><span class="o">)</span><span class="o">,</span> r <span class="o">*</span> math<span class="o">.</span>sin<span class="o">(</span>math<span class="o">.</span>radians<span class="o">(</span>ang<span class="o">)</span><span class="o">)</span><span class="o">,</span> <span class="n">0</span><span class="o">)</span></div><div class="a t" style="left:1110px;top:562px;width:38px;text-align:right;font-size:13px;color:#3a3a3a">26</div><div class="a t" style="left:1110px;top:579px;width:38px;text-align:right;font-size:13px;color:#3a3a3a">27</div><div class="a code" style="left:1153px;top:578px"><span class="c">#-- Vector difference. The one that will be displayed</span></div><div class="a t" style="left:1110px;top:596px;width:38px;text-align:right;font-size:13px;color:#3a3a3a">28</div><div class="a code" style="left:1153px;top:595px">vd <span class="eq">=</span> vr <span class="o">-</span> v1</div><div class="a t" style="left:1110px;top:613px;width:38px;text-align:right;font-size:13px;color:#3a3a3a">29</div><div class="a t" style="left:1110px;top:630px;width:38px;text-align:right;font-size:13px;color:#3a3a3a">30</div><div class="a code" style="left:1153px;top:629px"><span class="c">#----------------------- Create the field!</span></div><div class="a t" style="left:1110px;top:647px;width:38px;text-align:right;font-size:13px;color:#3a3a3a">31</div><div class="a code" style="left:1153px;top:646px">l <span class="eq">=</span> <span class="o">[</span>svector<span class="o">(</span>vd<span class="o">)</span><span class="o">.</span>translate<span class="o">(</span>v1<span class="o">+</span>Vector<span class="o">(</span><span class="n">4</span><span class="o">,</span><span class="n">0</span><span class="o">,</span><span class="n">0</span><span class="o">)</span><span class="o">)</span><span class="o">.</span>rotz<span class="o">(</span>ang <span class="o">*</span> i<span class="o">)</span><span class="o">.</span>color<span class="o">(</span><span class="s">&quot;red&quot;</span><span class="o">)</span> <span class="k">for</span> i <span class="k">in</span> xrange<span class="o">(</span>N<span class="o">)</span><span class="o">]</span></div><div class="a t" style="left:1110px;top:664px;width:38px;text-align:right;font-size:13px;color:#3a3a3a">32</div><div class="a code" style="left:1153px;top:663px">field <span class="eq">=</span> union<span class="o">(</span>l<span class="o">)</span></div><div class="a t" style="left:1110px;top:681px;width:38px;text-align:right;font-size:13px;color:#3a3a3a">33</div><div class="a t" style="left:1110px;top:698px;width:38px;text-align:right;font-size:13px;color:#3a3a3a">34</div><div class="a code" style="left:1153px;top:697px"><span class="c">#-- Show the section wire</span></div><div class="a t" style="left:1110px;top:715px;width:38px;text-align:right;font-size:13px;color:#3a3a3a">35</div><div class="a code" style="left:1153px;top:714px">cable <span class="eq">=</span> cylinder<span class="o">(</span>r <span class="eq">=</span> <span class="n">15</span><span class="o">,</span> h <span class="eq">=</span> <span class="n">50</span><span class="o">,</span> center <span class="eq">=</span> True<span class="o">)</span><span class="o">.</span>color<span class="o">(</span><span class="s">&quot;green&quot;</span><span class="o">)</span></div><div class="a t" style="left:1110px;top:732px;width:38px;text-align:right;font-size:13px;color:#3a3a3a">36</div><div class="a t" style="left:1110px;top:749px;width:38px;text-align:right;font-size:13px;color:#3a3a3a">37</div><div class="a code" style="left:1153px;top:748px"><span class="c">#-- Show the intensity vector (big and blue)</span></div><div class="a t" style="left:1110px;top:766px;width:38px;text-align:right;font-size:13px;color:#3a3a3a">38</div><div class="a code" style="left:1153px;top:765px">iv <span class="eq">=</span> svector<span class="o">(</span><span class="o">(</span><span class="n">0</span><span class="o">,</span><span class="n">0</span><span class="o">,</span><span class="n">1</span><span class="o">)</span><span class="o">,</span> l <span class="eq">=</span> <span class="n">150</span><span class="o">)</span><span class="o">.</span>translate<span class="o">(</span><span class="n">0</span><span class="o">,</span><span class="n">0</span><span class="o">,</span><span class="o">-</span><span class="n">150</span><span class="o">/</span><span class="n">2.</span><span class="o">)</span><span class="o">.</span>color<span class="o">(</span><span class="s">&quot;blue&quot;</span><span class="o">)</span></div><div class="a t" style="left:1110px;top:783px;width:38px;text-align:right;font-size:13px;color:#3a3a3a">39</div><div class="a code" style="left:1153px;top:782px">iv<span class="o">.</span>d <span class="eq">=</span> <span class="n">5</span></div><div class="a t" style="left:1110px;top:800px;width:38px;text-align:right;font-size:13px;color:#3a3a3a">40</div><div class="a code" style="left:1153px;top:799px">iv<span class="o">.</span>arrow_l <span class="eq">=</span> <span class="n">20</span></div><div class="a t" style="left:1110px;top:817px;width:38px;text-align:right;font-size:13px;color:#3a3a3a">41</div><div class="a t" style="left:1110px;top:834px;width:38px;text-align:right;font-size:13px;color:#3a3a3a">42</div><div class="a code" style="left:1153px;top:833px"><span class="c">#---  Show the figure center and in axonometric view</span></div><div class="a t" style="left:1110px;top:851px;width:38px;text-align:right;font-size:13px;color:#3a3a3a">43</div><div class="a code" style="left:1153px;top:850px">Gui<span class="o">.</span>SendMsgToActiveView<span class="o">(</span><span class="s">&quot;ViewFit&quot;</span><span class="o">)</span></div><div class="a t" style="left:1110px;top:868px;width:38px;text-align:right;font-size:13px;color:#3a3a3a">44</div><div class="a code" style="left:1153px;top:867px">Gui<span class="o">.</span>activeDocument<span class="o">(</span><span class="o">)</span><span class="o">.</span>activeView<span class="o">(</span><span class="o">)</span><span class="o">.</span>viewAxometric<span class="o">(</span><span class="o">)</span></div>
<div class="a" style="left:285px;top:998px;width:508px;height:30px;border:1px solid #bcb9b3;border-top:none;border-radius:0 0 0 5px;background:linear-gradient(#dddbd7,#ecebe9 30%,#f4f3f2)"></div><svg class="a" style="left:292px;top:1004px" width="18" height="18" viewBox="0 0 18 18"><path d="M8.5,0.5 C4,0.5 4.3,2.5 4.3,2.5 L4.3,4.6 L8.6,4.6 L8.6,5.3 L2.6,5.3 C2.6,5.3 0,5 0,9.3 C0,13.6 2.3,13.4 2.3,13.4 L3.7,13.4 L3.7,11.4 C3.7,11.4 3.6,9.1 6,9.1 L10.2,9.1 C10.2,9.1 12.4,9.1 12.4,6.9 L12.4,2.8 C12.4,2.8 12.7,0.5 8.5,0.5 Z" fill="#3a74b0"/><circle cx="6" cy="2.4" r="0.8" fill="#fff"/><path d="M8.8,17.5 C13.3,17.5 13,15.5 13,15.5 L13,13.4 L8.7,13.4 L8.7,12.7 L14.7,12.7 C14.7,12.7 17.3,13 17.3,8.7 C17.3,4.4 15,4.6 15,4.6 L13.6,4.6 L13.6,6.6 C13.6,6.6 13.7,8.9 11.3,8.9 L7.1,8.9 C7.1,8.9 4.9,8.9 4.9,11.1 L4.9,15.2 C4.9,15.2 4.6,17.5 8.8,17.5 Z" fill="#f8d038"/><circle cx="11.3" cy="15.6" r="0.8" fill="#fff"/></svg><div class="a t" style="left:316px;top:1006px;font-size:15.65px;color:#3c3c3c">/home/obijuan/development/friki/example-vector-field.py - Editor</div><svg class="a" style="left:767px;top:1008px" width="13" height="12" viewBox="0 0 13 12"><path d="M2,2 L11,10 M11,2 L2,10" stroke="#4a4a4a" stroke-width="3.8" stroke-linecap="round"/></svg><div class="a" style="left:793px;top:998px;width:148px;height:33px;border:1px solid #bcb9b3;border-top:none;border-radius:0 0 5px 5px;background:linear-gradient(#f2f1f0,#f7f7f6)"></div><svg class="a" style="left:800px;top:1006px" width="15" height="14" viewBox="0 0 15 14"><path d="M0.5,0.5 L7,0.5 L7,3 L3.5,3 L3.5,6 L6.5,6 L6.5,8.5 L3.5,8.5 L3.5,13 L0.5,13 Z" fill="#ff3a10"/><circle cx="9.5" cy="8.5" r="4" fill="#2040c0" stroke="#0a2080" stroke-width="1.8" stroke-dasharray="1.8 1.2"/><circle cx="9.5" cy="8.5" r="1.5" fill="#fff"/></svg><div class="a t" style="left:823px;top:1007px;font-size:15px;color:#3c3c3c">Example : 1*</div><svg class="a" style="left:917px;top:1009px" width="13" height="12" viewBox="0 0 13 12"><path d="M2,2 L11,10 M11,2 L2,10" stroke="#4a4a4a" stroke-width="3.8" stroke-linecap="round"/></svg><svg class="a" style="left:988px;top:1033px" width="9" height="4" viewBox="0 0 9 4"><g stroke="#c4c1bb"><line x1="0.5" y1="0" x2="0.5" y2="4"/><line x1="3.5" y1="0" x2="3.5" y2="4"/><line x1="6.5" y1="0" x2="6.5" y2="4"/></g></svg>
<div class="a t" style="left:67px;top:1042px;font-size:15px">Report view</div><svg class="a" style="left:837px;top:1044px" width="11" height="11" viewBox="0 0 11 11"><rect x="0.5" y="0.5" width="10" height="10" rx="2" fill="none" stroke="#6a6a6a"/><rect x="4" y="2.5" width="4.5" height="4.5" fill="none" stroke="#6a6a6a" stroke-width="1.1"/><rect x="2.5" y="4" width="4.5" height="4.5" fill="#f2f1f0" stroke="#6a6a6a" stroke-width="1.1"/></svg><svg class="a" style="left:854px;top:1044px" width="11" height="11" viewBox="0 0 11 11"><rect x="0.5" y="0.5" width="10" height="10" rx="2" fill="none" stroke="#6a6a6a"/><path d="M3,3 L8,8 M8,3 L3,8" stroke="#5a5a5a" stroke-width="1.9"/></svg><div class="a" style="left:65px;top:1062px;width:803px;height:108px;border:1px solid #b9b6b0;border-bottom:1px solid #c8c5c0;background:#fff"></div><svg class="a" style="left:870px;top:1099px" width="3" height="8" viewBox="0 0 3 8"><g stroke="#c4c1bb"><line x1="0" y1="0.5" x2="3" y2="0.5"/><line x1="0" y1="3.5" x2="3" y2="3.5"/><line x1="0" y1="6.5" x2="3" y2="6.5"/></g></svg><div class="a t" style="left:876px;top:1042px;font-size:15px">Python console</div><svg class="a" style="left:1889px;top:1044px" width="11" height="11" viewBox="0 0 11 11"><rect x="0.5" y="0.5" width="10" height="10" rx="2" fill="none" stroke="#6a6a6a"/><rect x="4" y="2.5" width="4.5" height="4.5" fill="none" stroke="#6a6a6a" stroke-width="1.1"/><rect x="2.5" y="4" width="4.5" height="4.5" fill="#f2f1f0" stroke="#6a6a6a" stroke-width="1.1"/></svg><svg class="a" style="left:1906px;top:1044px" width="11" height="11" viewBox="0 0 11 11"><rect x="0.5" y="0.5" width="10" height="10" rx="2" fill="none" stroke="#6a6a6a"/><path d="M3,3 L8,8 M8,3 L3,8" stroke="#5a5a5a" stroke-width="1.9"/></svg><div class="a" style="left:874px;top:1062px;width:1031px;height:108px;border:1px solid #b9b6b0;border-bottom:1px solid #c8c5c0;background:#fff"></div><div class="a" style="left:1906px;top:1062px;width:13px;height:107px;border:1px solid #c8c5c0;border-radius:6px;background:#eceae7"></div><div class="a" style="left:1907px;top:1076px;width:11px;height:76px;border-radius:5px;background:linear-gradient(90deg,#d8d6d2,#e4e2de)"></div><div class="a" style="left:1906px;top:1118px;width:13px;height:32px;border:1px solid #a8a5a0;border-radius:6px;background:linear-gradient(90deg,#fbfbfa,#ebeae8)"></div><svg class="a" style="left:1909px;top:1067px" width="7" height="4" viewBox="0 0 7 4"><path d="M0,4 L3.5,0 L7,4Z" fill="#555"/></svg><svg class="a" style="left:1909px;top:1161px" width="7" height="4" viewBox="0 0 7 4"><path d="M0,0 L3.5,4 L7,0Z" fill="#555"/></svg><svg class="a" style="left:1911px;top:1131px" width="3" height="7" viewBox="0 0 3 7"><g stroke="#999"><line x1="0" y1="0.5" x2="3" y2="0.5"/><line x1="0" y1="3.5" x2="3" y2="3.5"/><line x1="0" y1="6.5" x2="3" y2="6.5"/></g></svg><div class="a code" style="left:880px;top:1064px;word-spacing:0"><span class="o" style="letter-spacing:3.2px">&gt;&gt;&gt;</span></div><div class="a code" style="left:918px;top:1064px;word-spacing:0">Gui<span class="o">.</span>ActiveDocument<span class="o">=</span><span class="k" style="font-weight:bold">None</span></div><div class="a code" style="left:880px;top:1081px;word-spacing:0"><span class="o" style="letter-spacing:3.2px">&gt;&gt;&gt;</span></div><div class="a code" style="left:918px;top:1081px;word-spacing:0">Gui<span class="o">.</span>SendMsgToActiveView<span class="o">(</span><span class="s">"Run"</span><span class="o">)</span></div><div class="a code" style="left:880px;top:1098px;word-spacing:0"><span class="o" style="letter-spacing:3.2px">&gt;&gt;&gt;</span></div><div class="a code" style="left:918px;top:1098px;word-spacing:0">App<span class="o">.</span>setActiveDocument<span class="o">(</span><span class="s">"Example"</span><span class="o">)</span></div><div class="a code" style="left:880px;top:1115px;word-spacing:0"><span class="o" style="letter-spacing:3.2px">&gt;&gt;&gt;</span></div><div class="a code" style="left:918px;top:1115px;word-spacing:0">App<span class="o">.</span>ActiveDocument<span class="o">=</span>App<span class="o">.</span>getDocument<span class="o">(</span><span class="s">"Example"</span><span class="o">)</span></div><div class="a code" style="left:880px;top:1132px;word-spacing:0"><span class="o" style="letter-spacing:3.2px">&gt;&gt;&gt;</span></div><div class="a code" style="left:918px;top:1132px;word-spacing:0">Gui<span class="o">.</span>ActiveDocument<span class="o">=</span>Gui<span class="o">.</span>getDocument<span class="o">(</span><span class="s">"Example"</span><span class="o">)</span></div><div class="a code" style="left:880px;top:1149px;word-spacing:0"><span class="o" style="letter-spacing:3.2px">&gt;&gt;&gt;</span></div><div class="a code" style="left:918px;top:1149px;word-spacing:0"></div><div class="a t" style="left:72px;top:1178px;font-size:14.5px">Preselected: Example.Vector020.Face4 (-1.509050,-1.979915,-55.762589)</div><div class="a t" style="left:1787px;top:1178px;font-size:14.6px">112.09 x 119.84 mm</div>
</body></html>
